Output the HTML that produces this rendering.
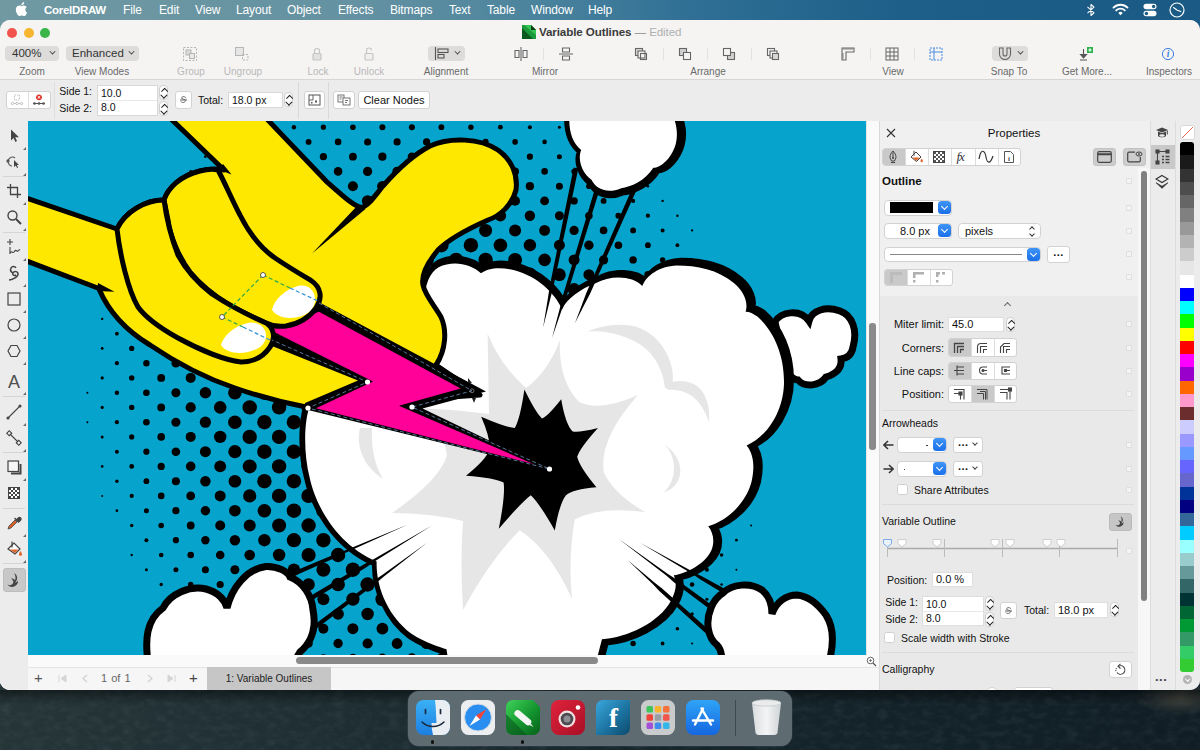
<!DOCTYPE html>
<html><head><meta charset="utf-8"><title>CorelDRAW</title>
<style>
*{box-sizing:border-box;margin:0;padding:0}
html,body{width:1200px;height:750px;overflow:hidden}
body{font-family:"Liberation Sans",sans-serif;font-size:11px;color:#222;background:#1d2a2e;position:relative}
.abs{position:absolute}
#desk{left:0;top:0;width:1200px;height:750px;background:#1c292d;overflow:hidden}
#menubar{left:0;top:0;width:1200px;height:32px;background:linear-gradient(90deg,#7099a2 0%,#6492a2 30%,#4a839d 45%,#2f6f95 58%,#1d5f88 75%,#1a5a84 100%);color:#fff;font-size:12px;letter-spacing:-.15px}
#menubar span{position:absolute;top:2px;line-height:16px;white-space:nowrap}
#win{left:0;top:20px;width:1200px;height:670px;background:#ececec;border-radius:10px;overflow:hidden}
#win>*{position:absolute}
#titlebar{left:0;top:0;width:1200px;height:60px;background:#f5f4f3;border-bottom:1px solid #d6d6d6}
.tl{width:10px;height:10px;border-radius:50%;top:7.75px}
.tlabel{position:absolute;top:46px;font-size:10px;color:#6a6a6a;white-space:nowrap;transform:translateX(-50%);line-height:12px}
.tlabel.dis{color:#b8b8b8}
.pill{position:absolute;top:26px;height:15px;background:#dddcdb;border-radius:4px;font-size:11.5px;line-height:15px;color:#333;padding-left:5px;white-space:nowrap}
.chev{position:absolute;width:5px;height:5px;border:solid #333;border-width:0 1.4px 1.4px 0;transform:rotate(45deg)}
.tsep{position:absolute;top:28px;width:1px;height:12px;background:#e2e2e2}
.ticon{position:absolute;top:25.5px}
.btn{position:absolute;background:#fff;border:1px solid #d2d2d2;border-radius:3px;font-size:11px;color:#111;text-align:center;white-space:nowrap}
.fld{position:absolute;background:#fff;border:1px solid #d8d8d8;font-size:10.5px;line-height:14px;padding-left:3px;color:#111;white-space:nowrap}
.lbl{position:absolute;font-size:10.5px;line-height:14px;color:#111;white-space:nowrap}
.lbl.r{text-align:right}
.step{position:absolute;width:9px;height:15px;background:#fff;border:1px solid #cfcfcf;border-radius:4px}
.step:before,.step:after{content:"";position:absolute;left:1.8px;width:3.5px;height:3.5px;border:solid #222;border-width:1.2px 1.2px 0 0}
.step:before{top:3px;transform:rotate(-45deg)}
.step:after{top:6.500px;transform:rotate(135deg)}
.vsep{position:absolute;width:1px;background:#d9d9d9}
.hsep{position:absolute;height:1px;background:#dcdcdc}
.blue{position:absolute;width:13px;height:13px;border-radius:3.5px;background:linear-gradient(#3f95f7,#1a6fe8)}
.blue:after{content:"";position:absolute;left:4px;top:3px;width:4px;height:4px;border:solid #fff;border-width:0 1.3px 1.3px 0;transform:rotate(45deg)}
.sq{position:absolute;left:1126px;width:6px;height:6px;border:1px solid #dedede;background:#f4f4f4;border-radius:1px}
.seg{position:absolute;height:17px;background:#fff;border:1px solid #d2d2d2;border-radius:3px;overflow:hidden}
.seg i{position:absolute;top:0;height:15px;width:23px;border-right:1px solid #dcdcdc}
.seg i.on{background:#c9c9c9}
.seg.t{height:18.5px}.seg.t i{height:16.5px}#dk .lbl{font-size:10.5px}#dk .lbl.r{font-size:11px}#dk .fld{font-size:11px}.cb{position:absolute;width:11px;height:11px;background:#fff;border:1px solid #d0d0d0;border-radius:2.5px}
.tri{position:absolute;left:23px;width:0;height:0;border-left:3px solid transparent;border-bottom:3px solid #666}
.tool{position:absolute;left:4px;width:20px;height:20px}
</style></head><body>
<div id="desk" class="abs"><svg width="1200" height="750" style="position:absolute;left:0;top:0"><defs><filter id="sea" x="0" y="0" width="100%" height="100%"><feTurbulence type="fractalNoise" baseFrequency="0.09 0.16" numOctaves="3" seed="7"/><feColorMatrix type="matrix" values="0 0 0 0 0.55  0 0 0 0 0.65  0 0 0 0 0.66  0.8 0.8 0 0 -0.68"/></filter><linearGradient id="dg" x1="0" y1="0" x2="1" y2="0"><stop offset="0" stop-color="#263538"/><stop offset=".3" stop-color="#1d2d32"/><stop offset=".55" stop-color="#16252c"/><stop offset="1" stop-color="#101d25"/></linearGradient><radialGradient id="rk" cx=".5" cy=".5" r=".5"><stop offset="0" stop-color="#4a4a40" stop-opacity=".8"/><stop offset="1" stop-color="#4a4a40" stop-opacity="0"/></radialGradient><linearGradient id="sh" x1="0" y1="0" x2="0" y2="1"><stop offset="0" stop-color="#000" stop-opacity=".45"/><stop offset="1" stop-color="#000" stop-opacity="0"/></linearGradient></defs><rect width="1200" height="750" fill="url(#dg)"/><rect y="680" width="1200" height="70" filter="url(#sea)" opacity=".12"/><ellipse cx="1180" cy="698" rx="45" ry="18" fill="url(#rk)"/><rect y="690" width="1200" height="14" fill="url(#sh)"/></svg></div>
<div id="menubar" class="abs">
<svg class="abs" style="left:15px;top:2px" width="14" height="16" viewBox="0 0 14 16"><path fill="#fff" d="M9.6 2.6c.6-.7 1-1.600.9-2.500-.8.050-1.800.55-2.400 1.250-.5.600-1 1.550-.85 2.450.9.050 1.800-.45 2.350-1.200zM10.500 4c-1.300-.05-2.400.75-3 .75-.65 0-1.600-.7-2.600-.7C3.500 4.100 2.300 4.900 1.600 6.100.2 8.500 1.250 12.100 2.600 14.050c.65.950 1.450 2 2.500 2 1-.05 1.400-.65 2.600-.65s1.550.65 2.600.6c1.100 0 1.750-.95 2.400-1.900.75-1.100 1.050-2.150 1.100-2.200-.05 0-2.100-.8-2.100-3.150 0-2 1.600-2.900 1.700-2.950-.95-1.350-2.400-1.500-2.900-1.550z" transform="scale(.88)"/></svg>
<span style="left:44px;font-weight:bold;font-size:11.5px;letter-spacing:-.3px">CorelDRAW</span>
<span style="left:123px">File</span>
<span style="left:159px">Edit</span>
<span style="left:195px">View</span>
<span style="left:236px">Layout</span>
<span style="left:287px">Object</span>
<span style="left:338px">Effects</span>
<span style="left:390px">Bitmaps</span>
<span style="left:449px">Text</span>
<span style="left:487px">Table</span>
<span style="left:531px">Window</span>
<span style="left:588px">Help</span>
<!-- status icons -->
<svg class="abs" style="left:1086px;top:3px" width="10" height="14" viewBox="0 0 10 14"><path d="M1.500 3.800 8 9.800 5 12.500V1.500L8 4.200 1.500 10.200" fill="none" stroke="#fff" stroke-width="1.100" stroke-linejoin="round"/></svg>
<svg class="abs" style="left:1112px;top:3px" width="17" height="13" viewBox="0 0 17 13"><g fill="none" stroke="#fff" stroke-width="1.900" stroke-linecap="round"><path d="M1.500 4.600a10 10 0 0 1 14 0"/><path d="M4.200 7.400a6.200 6.200 0 0 1 8.600 0"/></g><path d="M8.500 12.300 6.300 9.900a3.200 3.200 0 0 1 4.400 0z" fill="#fff"/></svg>
<svg class="abs" style="left:1143px;top:3px" width="14" height="14" viewBox="0 0 14 14"><rect x=".5" y=".8" width="13" height="5.400" rx="2.700" fill="#fff"/><circle cx="10.600" cy="3.500" r="1.700" fill="#1b5d87"/><rect x=".5" y="7.800" width="13" height="5.400" rx="2.700" fill="#fff"/><circle cx="3.400" cy="10.500" r="1.700" fill="#1b5d87"/></svg>
<svg class="abs" style="left:1169px;top:2px" width="16" height="16" viewBox="0 0 16 16"><circle cx="8" cy="8" r="7" fill="none" stroke="#fff" stroke-width="1.200"/><path d="M4.500 5.500 8.300 8.200 11.800 9.600" fill="none" stroke="#fff" stroke-width="1.100" stroke-linecap="round"/></svg>
</div>
<div id="win" class="abs"><div id="titlebar">
<div class="abs tl" style="left:6.900px;background:#f2544d"></div>
<div class="abs tl" style="left:23.500px;background:#f5b52e"></div>
<div class="abs tl" style="left:40.200px;background:#39b54a"></div>
<!-- title -->
<svg class="abs" style="left:522px;top:5px" width="14" height="14" viewBox="0 0 14 14"><path d="M0 0h9l5 5v9H0z" fill="#1a9a3c"/><path d="M0 3 11 14H0z" fill="#0c5a20"/><path d="M2 0h7l5 5v5z" fill="#35c354"/><path d="M9 0v5h5z" fill="#0a3d16"/></svg>
<div class="abs" style="left:539px;top:5px;font-size:11.600px;font-weight:bold;color:#3a3a3a;line-height:14px;white-space:nowrap;letter-spacing:-.1px">Variable Outlines <span style="font-weight:normal;color:#8a8a8a">—</span> <span style="font-weight:normal;color:#b0b0b0">Edited</span></div>
<!-- zoom / view modes -->
<div class="pill" style="left:5px;width:54px;padding-left:7px">400%<i class="chev" style="left:45px;top:3px;transform:rotate(45deg) scale(.85)"></i></div>
<div class="pill" style="left:66px;width:73px;padding-left:6px">Enhanced<i class="chev" style="left:63px;top:3px;transform:rotate(45deg) scale(.85)"></i></div>
<div class="tlabel" style="left:32px">Zoom</div>
<div class="tlabel" style="left:102px">View Modes</div>
<!-- group / ungroup -->
<svg class="ticon" style="left:182px" width="16" height="16" viewBox="0 0 16 16" fill="none" stroke="#b5b5b5"><rect x="1.500" y="1.500" width="13" height="13" stroke-dasharray="2 1.500"/><rect x="4" y="4" width="5" height="5" fill="#dcdcdc"/><rect x="7.500" y="7.500" width="5" height="5" fill="#e8e8e8"/></svg>
<svg class="ticon" style="left:234px" width="16" height="16" viewBox="0 0 16 16" fill="none" stroke="#b5b5b5"><rect x="1.500" y="1.500" width="8" height="8" fill="#e6e6e6"/><rect x="8.500" y="8.500" width="5.500" height="5.500" stroke-dasharray="2 1.500"/></svg>
<div class="tlabel dis" style="left:191px">Group</div>
<div class="tlabel dis" style="left:243px">Ungroup</div>
<!-- lock / unlock -->
<svg class="ticon" style="left:310px" width="14" height="16" viewBox="0 0 14 16" fill="none" stroke="#c4c4c4" stroke-width="1.200"><rect x="3" y="7.500" width="8" height="6.500" rx="1" fill="#e2e2e2"/><path d="M4.500 7.500V5a2.500 2.500 0 0 1 5 0v2.500"/></svg>
<svg class="ticon" style="left:362px" width="14" height="16" viewBox="0 0 14 16" fill="none" stroke="#c4c4c4" stroke-width="1.200"><rect x="3" y="7.500" width="8" height="6.500" rx="1" fill="#f0f0f0"/><path d="M4.500 7.500V4.500a2.500 2.500 0 0 1 5 0"/></svg>
<div class="tlabel dis" style="left:318px">Lock</div>
<div class="tlabel dis" style="left:369px">Unlock</div>
<!-- alignment -->
<div class="pill" style="left:428px;width:37px"><svg class="abs" style="left:6px;top:1px" width="16" height="13" viewBox="0 0 16 13" fill="none" stroke="#555" stroke-width="1.100"><path d="M1.500 0v13"/><rect x="4" y="2" width="10" height="3.500"/><rect x="4" y="7.500" width="6" height="3.500"/></svg><i class="chev" style="left:27px;top:3px;transform:rotate(45deg) scale(.85)"></i></div>
<div class="tlabel" style="left:446px">Alignment</div>
<!-- mirror -->
<svg class="ticon" style="left:513px" width="16" height="16" viewBox="0 0 16 16" fill="none" stroke="#666" stroke-width="1.100"><path d="M8 1v14"/><path d="M2 4.500h4v7H2z"/><path d="M10 4.500h4v7h-4z"/></svg>
<div class="tsep" style="left:543px"></div>
<svg class="ticon" style="left:558px" width="16" height="16" viewBox="0 0 16 16" fill="none" stroke="#666" stroke-width="1.100"><path d="M1 8h14"/><path d="M4.500 2h7v4h-7z"/><path d="M4.500 10h7v4h-7z"/></svg>
<div class="tlabel" style="left:545px">Mirror</div>
<!-- arrange -->
<svg class="ticon" style="left:633px" width="16" height="16" viewBox="0 0 16 16" fill="none" stroke="#666" stroke-width="1.100"><rect x="2.500" y="2.500" width="7" height="7" fill="#d8d8d8"/><rect x="5" y="5" width="7" height="7" fill="#f5f4f3"/><rect x="7.500" y="7.500" width="6" height="6" fill="none"/></svg>
<div class="tsep" style="left:663px"></div>
<svg class="ticon" style="left:677px" width="16" height="16" viewBox="0 0 16 16" fill="none" stroke="#666" stroke-width="1.100"><rect x="2.500" y="2.500" width="7" height="7" fill="#d0d0d0"/><rect x="6.500" y="6.500" width="7" height="7" fill="#f5f4f3"/></svg>
<div class="tsep" style="left:707px"></div>
<svg class="ticon" style="left:721px" width="16" height="16" viewBox="0 0 16 16" fill="none" stroke="#666" stroke-width="1.100"><rect x="6.500" y="6.500" width="7" height="7" fill="#d0d0d0"/><rect x="2.500" y="2.500" width="7" height="7" fill="#f5f4f3"/></svg>
<div class="tsep" style="left:751px"></div>
<svg class="ticon" style="left:765px" width="16" height="16" viewBox="0 0 16 16" fill="none" stroke="#666" stroke-width="1.100"><rect x="2.500" y="2.500" width="7" height="7" fill="#f5f4f3"/><rect x="5" y="5" width="7" height="7" fill="#f5f4f3"/><rect x="7.500" y="7.500" width="6" height="6" fill="#d8d8d8"/></svg>
<div class="tlabel" style="left:708px">Arrange</div>
<!-- view -->
<svg class="ticon" style="left:840px" width="16" height="16" viewBox="0 0 16 16" fill="none" stroke="#666" stroke-width="1.100"><path d="M2 2h12v4H6v8H2z"/><path d="M4 2v2M6 2v2M8 2v2M10 2v2M12 2v2M2 8h2M2 10h2M2 12h2" stroke-width=".8"/></svg>
<div class="tsep" style="left:870px"></div>
<svg class="ticon" style="left:884px" width="16" height="16" viewBox="0 0 16 16" fill="none" stroke="#666" stroke-width="1"><rect x="2" y="2" width="12" height="12"/><path d="M6 2v12M10 2v12M2 6h12M2 10h12"/></svg>
<div class="tsep" style="left:914px"></div>
<svg class="ticon" style="left:928px" width="16" height="16" viewBox="0 0 16 16" fill="none" stroke="#4a8be0" stroke-width="1"><rect x="2" y="2" width="12" height="12" stroke-dasharray="2 1"/><path d="M6 2v12M2 6h12"/></svg>
<div class="tlabel" style="left:893px">View</div>
<!-- snap to -->
<div class="pill" style="left:992px;width:36px"><svg class="abs" style="left:6px;top:1px" width="14" height="13" viewBox="0 0 14 13" fill="none" stroke="#666" stroke-width="1.100"><path d="M1.500 1h3.500v6a2 2 0 0 0 4 0V1h3.500v6a5.500 5.500 0 0 1-11 0z"/></svg><i class="chev" style="left:26px;top:3px;transform:rotate(45deg) scale(.85)"></i></div>
<div class="tlabel" style="left:1009px">Snap To</div>
<!-- get more -->
<svg class="ticon" style="left:1078px" width="18" height="16" viewBox="0 0 18 16"><path d="M5.500 3v8M2.500 8.500l3 3.500 3-3.500zM2 14h7" fill="#555" stroke="#555" stroke-width="1.100"/><rect x="9" y="1" width="6" height="6" fill="#2bb24c"/><path d="M12 2.300v3.400M10.300 4h3.400" stroke="#fff" stroke-width="1.100"/></svg>
<div class="tlabel" style="left:1087px">Get More...</div>
<!-- inspectors -->
<svg class="ticon" style="left:1160px" width="16" height="16" viewBox="0 0 16 16"><circle cx="8" cy="8" r="5.600" fill="none" stroke="#3a7fe0" stroke-width="1"/><text x="8" y="11.300" font-family="Liberation Serif,serif" font-style="italic" font-weight="bold" font-size="9.500" fill="#3a7fe0" text-anchor="middle">i</text></svg>
<div class="tlabel" style="left:1169px">Inspectors</div>
</div>
<div id="propbar" style="left:0;top:60px;width:1200px;height:41px;background:#ececec">
<div class="btn" style="left:6px;top:11px;width:45px;height:18px"></div>
<div class="vsep" style="left:28px;top:12px;height:16px;background:#e0e0e0"></div>
<svg class="abs" style="left:10px;top:14px" width="14" height="12" viewBox="0 0 14 12" fill="none" stroke="#c2c2c2" stroke-width="1"><rect x="4.500" y="1" width="5" height="5" stroke-dasharray="1.500 1"/><path d="M1 9.500h12"/><circle cx="2.500" cy="9.500" r="1.200" fill="#fff"/><circle cx="7" cy="9.500" r="1.200" fill="#fff"/><circle cx="11.500" cy="9.500" r="1.200" fill="#fff"/></svg>
<svg class="abs" style="left:32px;top:14px" width="14" height="12" viewBox="0 0 14 12"><circle cx="7" cy="3.300" r="2.900" fill="#e0322b"/><path d="M5.700 2l2.600 2.600M8.300 2 5.700 4.600" stroke="#fff" stroke-width="1"/><path d="M1 9.500h12" stroke="#555"/><circle cx="2.500" cy="9.500" r="1.300" fill="#555"/><circle cx="7" cy="9.500" r="1.300" fill="#555"/><circle cx="11.500" cy="9.500" r="1.300" fill="#555"/></svg>
<div class="lbl r" style="left:50px;width:42px;top:4px">Side 1:</div>
<div class="lbl r" style="left:50px;width:42px;top:21px">Side 2:</div>
<div class="fld" style="left:97px;top:5px;width:61px;height:31px"></div>
<div class="lbl" style="left:101px;top:6px">10.0</div>
<div class="lbl" style="left:101px;top:20px">8.0</div>
<div class="hsep" style="left:98px;top:20px;width:59px;background:#e8e8e8"></div>
<div class="step" style="left:159px;top:5px"></div>
<div class="step" style="left:159px;top:21px"></div>
<div class="btn" style="left:175px;top:11px;width:17px;height:18px"></div>
<svg class="abs" style="left:179px;top:15px" width="9" height="10" viewBox="0 0 9 10" fill="none" stroke="#666" stroke-width="1"><path d="M7 3.200C6.500 1.200 3 1 2.500 3c-.3 1.500 4 .8 4 2.500S3 8.500 2 6.500"/><path d="M1 5h7"/></svg>
<div class="lbl" style="left:198px;top:13px">Total:</div>
<div class="fld" style="left:228px;top:12px;width:55px;height:16px;line-height:14px">18.0 px</div>
<div class="step" style="left:284px;top:12px"></div>
<div class="vsep" style="left:298px;top:2px;height:37px"></div><div class="vsep" style="left:54px;top:2px;height:37px;background:#dfdfdf"></div>
<div class="btn" style="left:304px;top:11px;width:21px;height:18px"></div>
<svg class="abs" style="left:308px;top:14px" width="13" height="12" viewBox="0 0 13 12" fill="none" stroke="#555" stroke-width="1"><rect x="1" y="1" width="11" height="10"/><path d="M5 1v5H1" stroke-width=".9"/><rect x="7" y="6.500" width="2" height="2" fill="#555" stroke="none"/><rect x="3" y="8" width="1.500" height="1.500" fill="#555" stroke="none"/></svg>
<div class="vsep" style="left:328px;top:2px;height:37px"></div>
<div class="btn" style="left:333px;top:11px;width:22px;height:18px"></div>
<svg class="abs" style="left:337px;top:14px" width="14" height="12" viewBox="0 0 14 12" fill="none" stroke="#666" stroke-width=".9"><rect x="1" y="1" width="6" height="7"/><rect x="6" y="4" width="7" height="7" fill="#fff"/><path d="M2.500 3h3M2.500 5h2M8 6.500h3M8 8.500h2"/></svg>
<div class="btn" style="left:358px;top:11px;width:72px;height:18px;line-height:16px">Clear Nodes</div>
</div>
<div id="toolbox" style="left:0;top:101px;width:28px;height:569px;background:#ececec">
<!-- y in win coords = abs-20 ; inside toolbox = abs-121 -->
<svg class="tool" style="top:5px" viewBox="0 0 20 20"><path d="M7 3.500v11l2.600-2.600 1.800 4 1.600-.8-1.800-3.800H15z" fill="#444"/></svg><i class="tri" style="top:26px"></i>
<svg class="tool" style="top:31px" viewBox="0 0 20 20" fill="none" stroke="#555" stroke-width="1.100"><path d="M4 9c1-4 5-5 7-3M4 9c0 3 2 5 4 5"/><circle cx="4" cy="9" r="1.100" fill="#555"/><path d="M10 8v7l1.800-1.600 1.300 2.600 1-.5-1.300-2.600H15z" fill="#444" stroke="none"/></svg><i class="tri" style="top:52px"></i>
<div class="hsep" style="left:3px;top:55px;width:22px;background:#d6d6d6"></div>
<svg class="tool" style="top:60px" viewBox="0 0 20 20" fill="none" stroke="#444" stroke-width="1.300"><path d="M6.500 3v10.500H17M3 6.500h10.500V17"/></svg><i class="tri" style="top:81px"></i>
<svg class="tool" style="top:86px" viewBox="0 0 20 20" fill="none" stroke="#444" stroke-width="1.400"><circle cx="8.500" cy="8.500" r="4.500"/><path d="M12 12l5 5" stroke-width="2"/></svg><i class="tri" style="top:107px"></i>
<div class="hsep" style="left:3px;top:111px;width:22px;background:#d6d6d6"></div>
<svg class="tool" style="top:116px" viewBox="0 0 20 20" fill="none" stroke="#444" stroke-width="1.100"><path d="M6 2v6M3 5h6"/><path d="M6 10v7"/><path d="M6 16c2-3 2.500 1 4-1s1.500-2 3-1 2-2 3-1"/></svg><i class="tri" style="top:137px"></i>
<svg class="tool" style="top:142px" viewBox="0 0 20 20" fill="none" stroke="#444" stroke-width="1.500"><path d="M5 17c3 0 9-3 9-6s-4-3-5-1 1 3 3 2"/><path d="M9 10c-2-1-3-3-2-5s4-2 5 0" /></svg><i class="tri" style="top:163px"></i>
<svg class="tool" style="top:168px" viewBox="0 0 20 20" fill="none" stroke="#444" stroke-width="1.200"><rect x="4" y="4" width="12" height="12"/></svg><i class="tri" style="top:189px"></i>
<svg class="tool" style="top:194px" viewBox="0 0 20 20" fill="none" stroke="#444" stroke-width="1.200"><circle cx="10" cy="10" r="6"/></svg><i class="tri" style="top:215px"></i>
<svg class="tool" style="top:220px" viewBox="0 0 20 20" fill="none" stroke="#444" stroke-width="1.200"><path d="M7 4.500h6l3 5.500-3 5.500H7L4 10z"/></svg><i class="tri" style="top:241px"></i>
<div class="abs" style="left:4px;top:250px;width:20px;height:22px;font-size:18px;line-height:22px;text-align:center;color:#505050">A</div><i class="tri" style="top:271px"></i>
<div class="hsep" style="left:3px;top:275px;width:22px;background:#d6d6d6"></div>
<svg class="tool" style="top:281px" viewBox="0 0 20 20" fill="none" stroke="#444" stroke-width="1.100"><path d="M4 16 16 4"/><circle cx="4" cy="16" r="1" fill="#444"/><circle cx="16" cy="4" r="1" fill="#444"/></svg><i class="tri" style="top:302px"></i>
<svg class="tool" style="top:307px" viewBox="0 0 20 20" fill="none" stroke="#444" stroke-width="1.100"><path d="M6 6l8 8"/><rect x="3.500" y="3.500" width="3.500" height="3.500" transform="rotate(45 5.250 5.250)"/><rect x="13" y="13" width="3.500" height="3.500" transform="rotate(45 14.750 14.750)"/></svg><i class="tri" style="top:328px"></i>
<div class="hsep" style="left:3px;top:331px;width:22px;background:#d6d6d6"></div>
<svg class="tool" style="top:336px" viewBox="0 0 20 20" fill="none" stroke="#444" stroke-width="1.200"><path d="M7 16.500h9.500V7" stroke-width="2"/><rect x="4" y="4" width="10.500" height="10.500" fill="#f6f6f6"/></svg><i class="tri" style="top:357px"></i>
<svg class="tool" style="top:362px" viewBox="0 0 20 20"><rect x="4.500" y="4.500" width="11" height="11" fill="#fff" stroke="#444"/><g fill="#444"><rect x="5" y="5" width="2" height="2"/><rect x="9" y="5" width="2" height="2"/><rect x="13" y="5" width="2" height="2"/><rect x="7" y="7" width="2" height="2"/><rect x="11" y="7" width="2" height="2"/><rect x="5" y="9" width="2" height="2"/><rect x="9" y="9" width="2" height="2"/><rect x="13" y="9" width="2" height="2"/><rect x="7" y="11" width="2" height="2"/><rect x="11" y="11" width="2" height="2"/><rect x="5" y="13" width="2" height="2"/><rect x="9" y="13" width="2" height="2"/><rect x="13" y="13" width="2" height="2"/></g></svg>
<div class="hsep" style="left:3px;top:387px;width:22px;background:#d6d6d6"></div>
<svg class="tool" style="top:392px" viewBox="0 0 20 20"><path d="M4 16l1-3 6-6 2 2-6 6z" fill="#d9622b" stroke="#444" stroke-width=".8"/><path d="M11 5.500l3.500 3.500M12.500 7l2-2a1.400 1.400 0 0 1 2 2l-2 2" fill="#444" stroke="#444" stroke-width="1.600" stroke-linecap="round"/></svg><i class="tri" style="top:413px"></i>
<svg class="tool" style="top:418px" viewBox="0 0 20 20"><path d="M4 10l6-6 6 6-5 5z" fill="#fff" stroke="#444" stroke-width="1.200"/><path d="M5.500 10.500h9L11 14z" fill="#e0662b"/><path d="M8 2.500v6" stroke="#444" stroke-width="1.200"/><path d="M16.500 12c1 1.500 1.500 2.500 1.500 3.300a1.500 1.500 0 0 1-3 0c0-.8.500-1.800 1.500-3.300z" fill="#e0662b"/></svg><i class="tri" style="top:439px"></i>
<div class="hsep" style="left:3px;top:442px;width:22px;background:#d6d6d6"></div>
<div class="abs" style="left:3px;top:447px;width:23px;height:24px;background:#c8c8c8;border:1px solid #bdbdbd;border-radius:3px"></div>
<svg class="tool" style="top:449px" viewBox="0 0 20 20"><path d="M10 3c4 2 4 7 1 9.500 1.500-.3 2.500-1 3-2 .5 3-2 6-6 6.500-2 0-3.500-1-4.500-2.500 2 1 4 .8 5-.5 1.500-1.800 1-4-1.500-5.500 2 0 3.500.5 4 2C12 8 11.500 5 10 3z" fill="#444"/></svg>
</div>
<div id="cv" style="left:28px;top:101px;width:838px;height:534px;background:#06a3cc;overflow:hidden"><svg width="838" height="534" viewBox="28 121 838 534" style="position:absolute;left:0;top:0;display:block"><rect x="28" y="121" width="838" height="534" fill="#06a3cc"/><g fill="#000"><circle cx="87.4" cy="392.7" r="1.0"/><circle cx="87.4" cy="422.2" r="1.0"/><circle cx="102.2" cy="318.9" r="1.2"/><circle cx="102.2" cy="348.4" r="1.4"/><circle cx="102.2" cy="377.9" r="1.6"/><circle cx="102.2" cy="407.4" r="1.6"/><circle cx="102.2" cy="436.9" r="1.5"/><circle cx="102.2" cy="466.4" r="1.3"/><circle cx="102.2" cy="495.9" r="1.0"/><circle cx="116.9" cy="274.7" r="1.3"/><circle cx="116.9" cy="304.2" r="1.6"/><circle cx="116.9" cy="333.7" r="1.9"/><circle cx="116.9" cy="363.2" r="2.1"/><circle cx="116.9" cy="392.7" r="2.2"/><circle cx="116.9" cy="422.2" r="2.1"/><circle cx="116.9" cy="451.7" r="2.0"/><circle cx="116.9" cy="481.2" r="1.7"/><circle cx="116.9" cy="510.7" r="1.4"/><circle cx="131.7" cy="230.4" r="1.0"/><circle cx="131.7" cy="259.9" r="1.5"/><circle cx="131.7" cy="289.4" r="2.0"/><circle cx="131.7" cy="318.9" r="2.3"/><circle cx="131.7" cy="348.4" r="2.6"/><circle cx="131.7" cy="377.9" r="2.7"/><circle cx="131.7" cy="407.4" r="2.7"/><circle cx="131.7" cy="436.9" r="2.6"/><circle cx="131.7" cy="466.4" r="2.4"/><circle cx="131.7" cy="495.9" r="2.1"/><circle cx="131.7" cy="525.5" r="1.7"/><circle cx="131.7" cy="555.0" r="1.2"/><circle cx="146.4" cy="215.7" r="1.2"/><circle cx="146.4" cy="245.2" r="1.8"/><circle cx="146.4" cy="274.7" r="2.3"/><circle cx="146.4" cy="304.2" r="2.7"/><circle cx="146.4" cy="333.7" r="3.0"/><circle cx="146.4" cy="363.2" r="3.2"/><circle cx="146.4" cy="392.7" r="3.3"/><circle cx="146.4" cy="422.2" r="3.3"/><circle cx="146.4" cy="451.7" r="3.1"/><circle cx="146.4" cy="481.2" r="2.9"/><circle cx="146.4" cy="510.7" r="2.5"/><circle cx="146.4" cy="540.2" r="2.0"/><circle cx="146.4" cy="569.7" r="1.5"/><circle cx="161.2" cy="200.9" r="1.3"/><circle cx="161.2" cy="230.4" r="2.0"/><circle cx="161.2" cy="259.9" r="2.6"/><circle cx="161.2" cy="289.4" r="3.1"/><circle cx="161.2" cy="318.9" r="3.4"/><circle cx="161.2" cy="348.4" r="3.7"/><circle cx="161.2" cy="377.9" r="3.9"/><circle cx="161.2" cy="407.4" r="3.9"/><circle cx="161.2" cy="436.9" r="3.8"/><circle cx="161.2" cy="466.4" r="3.6"/><circle cx="161.2" cy="495.9" r="3.3"/><circle cx="161.2" cy="525.5" r="2.8"/><circle cx="161.2" cy="555.0" r="2.3"/><circle cx="161.2" cy="584.5" r="1.7"/><circle cx="161.2" cy="614.0" r="1.0"/><circle cx="175.9" cy="186.2" r="1.4"/><circle cx="175.9" cy="215.7" r="2.1"/><circle cx="175.9" cy="245.2" r="2.8"/><circle cx="175.9" cy="274.7" r="3.3"/><circle cx="175.9" cy="304.2" r="3.8"/><circle cx="175.9" cy="333.7" r="4.2"/><circle cx="175.9" cy="363.2" r="4.4"/><circle cx="175.9" cy="392.7" r="4.5"/><circle cx="175.9" cy="422.2" r="4.5"/><circle cx="175.9" cy="451.7" r="4.3"/><circle cx="175.9" cy="481.2" r="4.0"/><circle cx="175.9" cy="510.7" r="3.6"/><circle cx="175.9" cy="540.2" r="3.1"/><circle cx="175.9" cy="569.7" r="2.5"/><circle cx="175.9" cy="599.2" r="1.8"/><circle cx="175.9" cy="628.7" r="1.1"/><circle cx="190.7" cy="171.4" r="1.4"/><circle cx="190.7" cy="200.9" r="2.2"/><circle cx="190.7" cy="230.4" r="2.9"/><circle cx="190.7" cy="259.9" r="3.5"/><circle cx="190.7" cy="289.4" r="4.1"/><circle cx="190.7" cy="318.9" r="4.5"/><circle cx="190.7" cy="348.4" r="4.8"/><circle cx="190.7" cy="377.9" r="5.0"/><circle cx="190.7" cy="407.4" r="5.1"/><circle cx="190.7" cy="436.9" r="5.0"/><circle cx="190.7" cy="466.4" r="4.8"/><circle cx="190.7" cy="495.9" r="4.4"/><circle cx="190.7" cy="525.5" r="3.9"/><circle cx="190.7" cy="555.0" r="3.3"/><circle cx="190.7" cy="584.5" r="2.7"/><circle cx="190.7" cy="614.0" r="1.9"/><circle cx="190.7" cy="643.5" r="1.1"/><circle cx="205.4" cy="156.7" r="1.4"/><circle cx="205.4" cy="186.2" r="2.2"/><circle cx="205.4" cy="215.7" r="3.0"/><circle cx="205.4" cy="245.2" r="3.7"/><circle cx="205.4" cy="274.7" r="4.3"/><circle cx="205.4" cy="304.2" r="4.8"/><circle cx="205.4" cy="333.7" r="5.3"/><circle cx="205.4" cy="363.2" r="5.5"/><circle cx="205.4" cy="392.7" r="5.7"/><circle cx="205.4" cy="422.2" r="5.6"/><circle cx="205.4" cy="451.7" r="5.5"/><circle cx="205.4" cy="481.2" r="5.2"/><circle cx="205.4" cy="510.7" r="4.7"/><circle cx="205.4" cy="540.2" r="4.2"/><circle cx="205.4" cy="569.7" r="3.5"/><circle cx="205.4" cy="599.2" r="2.8"/><circle cx="205.4" cy="628.7" r="2.0"/><circle cx="205.4" cy="658.2" r="1.1"/><circle cx="220.2" cy="141.9" r="1.3"/><circle cx="220.2" cy="171.4" r="2.2"/><circle cx="220.2" cy="200.9" r="3.0"/><circle cx="220.2" cy="230.4" r="3.8"/><circle cx="220.2" cy="259.9" r="4.5"/><circle cx="220.2" cy="289.4" r="5.1"/><circle cx="220.2" cy="318.9" r="5.6"/><circle cx="220.2" cy="348.4" r="6.0"/><circle cx="220.2" cy="377.9" r="6.2"/><circle cx="220.2" cy="407.4" r="6.3"/><circle cx="220.2" cy="436.9" r="6.2"/><circle cx="220.2" cy="466.4" r="5.9"/><circle cx="220.2" cy="495.9" r="5.5"/><circle cx="220.2" cy="525.5" r="5.0"/><circle cx="220.2" cy="555.0" r="4.3"/><circle cx="220.2" cy="584.5" r="3.6"/><circle cx="220.2" cy="614.0" r="2.8"/><circle cx="220.2" cy="643.5" r="2.0"/><circle cx="234.9" cy="127.2" r="1.1"/><circle cx="234.9" cy="156.7" r="2.1"/><circle cx="234.9" cy="186.2" r="3.0"/><circle cx="234.9" cy="215.7" r="3.8"/><circle cx="234.9" cy="245.2" r="4.6"/><circle cx="234.9" cy="274.7" r="5.3"/><circle cx="234.9" cy="304.2" r="5.9"/><circle cx="234.9" cy="333.7" r="6.3"/><circle cx="234.9" cy="363.2" r="6.7"/><circle cx="234.9" cy="392.7" r="6.8"/><circle cx="234.9" cy="422.2" r="6.8"/><circle cx="234.9" cy="451.7" r="6.6"/><circle cx="234.9" cy="481.2" r="6.3"/><circle cx="234.9" cy="510.7" r="5.8"/><circle cx="234.9" cy="540.2" r="5.2"/><circle cx="234.9" cy="569.7" r="4.5"/><circle cx="234.9" cy="599.2" r="3.7"/><circle cx="234.9" cy="628.7" r="2.8"/><circle cx="234.9" cy="658.2" r="1.9"/><circle cx="249.7" cy="141.9" r="1.9"/><circle cx="249.7" cy="171.4" r="2.9"/><circle cx="249.7" cy="200.9" r="3.8"/><circle cx="249.7" cy="230.4" r="4.6"/><circle cx="249.7" cy="259.9" r="5.4"/><circle cx="249.7" cy="289.4" r="6.1"/><circle cx="249.7" cy="318.9" r="6.6"/><circle cx="249.7" cy="348.4" r="7.1"/><circle cx="249.7" cy="377.9" r="7.2"/><circle cx="249.7" cy="407.4" r="7.2"/><circle cx="249.7" cy="436.9" r="7.2"/><circle cx="249.7" cy="466.4" r="7.0"/><circle cx="249.7" cy="495.9" r="6.6"/><circle cx="249.7" cy="525.5" r="6.0"/><circle cx="249.7" cy="555.0" r="5.3"/><circle cx="249.7" cy="584.5" r="4.5"/><circle cx="249.7" cy="614.0" r="3.7"/><circle cx="249.7" cy="643.5" r="2.8"/><circle cx="264.4" cy="127.2" r="1.7"/><circle cx="264.4" cy="156.7" r="2.7"/><circle cx="264.4" cy="186.2" r="3.6"/><circle cx="264.4" cy="215.7" r="4.5"/><circle cx="264.4" cy="245.2" r="5.4"/><circle cx="264.4" cy="274.7" r="6.2"/><circle cx="264.4" cy="304.2" r="6.8"/><circle cx="264.4" cy="333.7" r="7.2"/><circle cx="264.4" cy="363.2" r="7.2"/><circle cx="264.4" cy="392.7" r="7.2"/><circle cx="264.4" cy="422.2" r="7.2"/><circle cx="264.4" cy="451.7" r="7.2"/><circle cx="264.4" cy="481.2" r="7.2"/><circle cx="264.4" cy="510.7" r="6.8"/><circle cx="264.4" cy="540.2" r="6.2"/><circle cx="264.4" cy="569.7" r="5.4"/><circle cx="264.4" cy="599.2" r="4.5"/><circle cx="264.4" cy="628.7" r="3.6"/><circle cx="264.4" cy="658.2" r="2.7"/><circle cx="279.1" cy="112.4" r="1.4"/><circle cx="279.1" cy="141.9" r="2.5"/><circle cx="279.1" cy="171.4" r="3.5"/><circle cx="279.1" cy="200.9" r="4.4"/><circle cx="279.1" cy="230.4" r="5.3"/><circle cx="279.1" cy="259.9" r="6.2"/><circle cx="279.1" cy="289.4" r="7.0"/><circle cx="279.1" cy="318.9" r="7.2"/><circle cx="279.1" cy="348.4" r="7.2"/><circle cx="279.1" cy="377.9" r="7.2"/><circle cx="279.1" cy="407.4" r="7.2"/><circle cx="279.1" cy="436.9" r="7.2"/><circle cx="279.1" cy="466.4" r="7.2"/><circle cx="279.1" cy="495.9" r="7.2"/><circle cx="279.1" cy="525.5" r="7.0"/><circle cx="279.1" cy="555.0" r="6.2"/><circle cx="279.1" cy="584.5" r="5.4"/><circle cx="279.1" cy="614.0" r="4.5"/><circle cx="279.1" cy="643.5" r="3.5"/><circle cx="293.9" cy="127.2" r="2.2"/><circle cx="293.9" cy="156.7" r="3.2"/><circle cx="293.9" cy="186.2" r="4.2"/><circle cx="293.9" cy="215.7" r="5.2"/><circle cx="293.9" cy="245.2" r="6.1"/><circle cx="293.9" cy="274.7" r="7.0"/><circle cx="293.9" cy="304.2" r="7.2"/><circle cx="293.9" cy="333.7" r="7.2"/><circle cx="293.9" cy="363.2" r="7.2"/><circle cx="293.9" cy="392.7" r="7.2"/><circle cx="293.9" cy="422.2" r="7.2"/><circle cx="293.9" cy="451.7" r="7.2"/><circle cx="293.9" cy="481.2" r="7.2"/><circle cx="293.9" cy="510.7" r="7.2"/><circle cx="293.9" cy="540.2" r="7.1"/><circle cx="293.9" cy="569.7" r="6.2"/><circle cx="293.9" cy="599.2" r="5.3"/><circle cx="293.9" cy="628.7" r="4.3"/><circle cx="293.9" cy="658.2" r="3.3"/><circle cx="308.6" cy="112.4" r="1.9"/><circle cx="308.6" cy="141.9" r="2.9"/><circle cx="308.6" cy="171.4" r="4.0"/><circle cx="308.6" cy="200.9" r="5.0"/><circle cx="308.6" cy="230.4" r="6.0"/><circle cx="308.6" cy="259.9" r="6.9"/><circle cx="308.6" cy="289.4" r="7.2"/><circle cx="308.6" cy="318.9" r="7.2"/><circle cx="308.6" cy="348.4" r="7.2"/><circle cx="308.6" cy="377.9" r="7.2"/><circle cx="308.6" cy="407.4" r="7.2"/><circle cx="308.6" cy="436.9" r="7.2"/><circle cx="308.6" cy="466.4" r="7.2"/><circle cx="308.6" cy="495.9" r="7.2"/><circle cx="308.6" cy="525.5" r="7.2"/><circle cx="308.6" cy="555.0" r="7.1"/><circle cx="308.6" cy="584.5" r="6.2"/><circle cx="308.6" cy="614.0" r="5.2"/><circle cx="308.6" cy="643.5" r="4.2"/><circle cx="323.4" cy="127.2" r="2.6"/><circle cx="323.4" cy="156.7" r="3.6"/><circle cx="323.4" cy="186.2" r="4.7"/><circle cx="323.4" cy="215.7" r="5.7"/><circle cx="323.4" cy="245.2" r="6.7"/><circle cx="323.4" cy="274.7" r="7.2"/><circle cx="323.4" cy="304.2" r="7.2"/><circle cx="323.4" cy="333.7" r="7.2"/><circle cx="323.4" cy="363.2" r="7.2"/><circle cx="323.4" cy="392.7" r="7.2"/><circle cx="323.4" cy="422.2" r="7.2"/><circle cx="323.4" cy="451.7" r="7.2"/><circle cx="323.4" cy="481.2" r="7.2"/><circle cx="323.4" cy="510.7" r="7.2"/><circle cx="323.4" cy="540.2" r="7.2"/><circle cx="323.4" cy="569.7" r="7.0"/><circle cx="323.4" cy="599.2" r="6.0"/><circle cx="323.4" cy="628.7" r="5.0"/><circle cx="323.4" cy="658.2" r="3.9"/><circle cx="338.1" cy="112.4" r="2.2"/><circle cx="338.1" cy="141.9" r="3.3"/><circle cx="338.1" cy="171.4" r="4.3"/><circle cx="338.1" cy="200.9" r="5.4"/><circle cx="338.1" cy="230.4" r="6.5"/><circle cx="338.1" cy="259.9" r="7.2"/><circle cx="338.1" cy="289.4" r="7.2"/><circle cx="338.1" cy="318.9" r="7.2"/><circle cx="338.1" cy="348.4" r="7.2"/><circle cx="338.1" cy="377.9" r="7.2"/><circle cx="338.1" cy="407.4" r="7.2"/><circle cx="338.1" cy="436.9" r="7.2"/><circle cx="338.1" cy="466.4" r="7.2"/><circle cx="338.1" cy="495.9" r="7.2"/><circle cx="338.1" cy="525.5" r="7.2"/><circle cx="338.1" cy="555.0" r="7.2"/><circle cx="338.1" cy="584.5" r="6.8"/><circle cx="338.1" cy="614.0" r="5.8"/><circle cx="338.1" cy="643.5" r="4.7"/><circle cx="352.9" cy="127.2" r="2.8"/><circle cx="352.9" cy="156.7" r="3.9"/><circle cx="352.9" cy="186.2" r="5.0"/><circle cx="352.9" cy="215.7" r="6.1"/><circle cx="352.9" cy="245.2" r="7.2"/><circle cx="352.9" cy="274.7" r="7.2"/><circle cx="352.9" cy="304.2" r="7.2"/><circle cx="352.9" cy="333.7" r="7.2"/><circle cx="352.9" cy="363.2" r="7.2"/><circle cx="352.9" cy="392.7" r="7.2"/><circle cx="352.9" cy="422.2" r="7.2"/><circle cx="352.9" cy="451.7" r="7.2"/><circle cx="352.9" cy="481.2" r="7.2"/><circle cx="352.9" cy="510.7" r="7.2"/><circle cx="352.9" cy="540.2" r="7.2"/><circle cx="352.9" cy="569.7" r="7.2"/><circle cx="352.9" cy="599.2" r="6.6"/><circle cx="352.9" cy="628.7" r="5.5"/><circle cx="352.9" cy="658.2" r="4.4"/><circle cx="367.6" cy="112.4" r="2.4"/><circle cx="367.6" cy="141.9" r="3.5"/><circle cx="367.6" cy="171.4" r="4.6"/><circle cx="367.6" cy="200.9" r="5.7"/><circle cx="367.6" cy="230.4" r="6.8"/><circle cx="367.6" cy="259.9" r="7.2"/><circle cx="367.6" cy="289.4" r="7.2"/><circle cx="367.6" cy="318.9" r="7.2"/><circle cx="367.6" cy="348.4" r="7.2"/><circle cx="367.6" cy="377.9" r="7.2"/><circle cx="367.6" cy="407.4" r="7.2"/><circle cx="367.6" cy="436.9" r="7.2"/><circle cx="367.6" cy="466.4" r="7.2"/><circle cx="367.6" cy="495.9" r="7.2"/><circle cx="367.6" cy="525.5" r="7.2"/><circle cx="367.6" cy="555.0" r="7.2"/><circle cx="367.6" cy="584.5" r="7.2"/><circle cx="367.6" cy="614.0" r="6.2"/><circle cx="367.6" cy="643.5" r="5.1"/><circle cx="382.4" cy="127.2" r="3.0"/><circle cx="382.4" cy="156.7" r="4.1"/><circle cx="382.4" cy="186.2" r="5.3"/><circle cx="382.4" cy="215.7" r="6.4"/><circle cx="382.4" cy="245.2" r="7.2"/><circle cx="382.4" cy="274.7" r="7.2"/><circle cx="382.4" cy="304.2" r="7.2"/><circle cx="382.4" cy="333.7" r="7.2"/><circle cx="382.4" cy="363.2" r="7.2"/><circle cx="382.4" cy="392.7" r="7.2"/><circle cx="382.4" cy="422.2" r="7.2"/><circle cx="382.4" cy="451.7" r="7.2"/><circle cx="382.4" cy="481.2" r="7.2"/><circle cx="382.4" cy="510.7" r="7.2"/><circle cx="382.4" cy="540.2" r="7.2"/><circle cx="382.4" cy="569.7" r="7.2"/><circle cx="382.4" cy="599.2" r="7.0"/><circle cx="382.4" cy="628.7" r="5.9"/><circle cx="382.4" cy="658.2" r="4.7"/><circle cx="397.1" cy="112.4" r="2.4"/><circle cx="397.1" cy="141.9" r="3.6"/><circle cx="397.1" cy="171.4" r="4.7"/><circle cx="397.1" cy="200.9" r="5.9"/><circle cx="397.1" cy="230.4" r="7.0"/><circle cx="397.1" cy="259.9" r="7.2"/><circle cx="397.1" cy="289.4" r="7.2"/><circle cx="397.1" cy="318.9" r="7.2"/><circle cx="397.1" cy="348.4" r="7.2"/><circle cx="397.1" cy="377.9" r="7.2"/><circle cx="397.1" cy="407.4" r="7.2"/><circle cx="397.1" cy="436.9" r="7.2"/><circle cx="397.1" cy="466.4" r="7.2"/><circle cx="397.1" cy="495.9" r="7.2"/><circle cx="397.1" cy="525.5" r="7.2"/><circle cx="397.1" cy="555.0" r="7.2"/><circle cx="397.1" cy="584.5" r="7.2"/><circle cx="397.1" cy="614.0" r="6.6"/><circle cx="397.1" cy="643.5" r="5.4"/><circle cx="411.9" cy="127.2" r="3.0"/><circle cx="411.9" cy="156.7" r="4.2"/><circle cx="411.9" cy="186.2" r="5.3"/><circle cx="411.9" cy="215.7" r="6.5"/><circle cx="411.9" cy="245.2" r="7.2"/><circle cx="411.9" cy="274.7" r="7.2"/><circle cx="411.9" cy="304.2" r="7.2"/><circle cx="411.9" cy="333.7" r="7.2"/><circle cx="411.9" cy="363.2" r="7.2"/><circle cx="411.9" cy="392.7" r="7.2"/><circle cx="411.9" cy="422.2" r="7.2"/><circle cx="411.9" cy="451.7" r="7.2"/><circle cx="411.9" cy="481.2" r="7.2"/><circle cx="411.9" cy="510.7" r="7.2"/><circle cx="411.9" cy="540.2" r="7.2"/><circle cx="411.9" cy="569.7" r="7.2"/><circle cx="411.9" cy="599.2" r="7.2"/><circle cx="411.9" cy="628.7" r="6.1"/><circle cx="411.9" cy="658.2" r="4.9"/><circle cx="426.6" cy="112.4" r="2.4"/><circle cx="426.6" cy="141.9" r="3.6"/><circle cx="426.6" cy="171.4" r="4.7"/><circle cx="426.6" cy="200.9" r="5.9"/><circle cx="426.6" cy="230.4" r="7.0"/><circle cx="426.6" cy="259.9" r="7.2"/><circle cx="426.6" cy="289.4" r="7.2"/><circle cx="426.6" cy="318.9" r="7.2"/><circle cx="426.6" cy="348.4" r="7.2"/><circle cx="426.6" cy="377.9" r="7.2"/><circle cx="426.6" cy="407.4" r="7.2"/><circle cx="426.6" cy="436.9" r="7.2"/><circle cx="426.6" cy="466.4" r="7.2"/><circle cx="426.6" cy="495.9" r="7.2"/><circle cx="426.6" cy="525.5" r="7.2"/><circle cx="426.6" cy="555.0" r="7.2"/><circle cx="426.6" cy="584.5" r="7.2"/><circle cx="426.6" cy="614.0" r="6.7"/><circle cx="426.6" cy="643.5" r="5.6"/><circle cx="441.4" cy="127.2" r="2.9"/><circle cx="441.4" cy="156.7" r="4.1"/><circle cx="441.4" cy="186.2" r="5.2"/><circle cx="441.4" cy="215.7" r="6.4"/><circle cx="441.4" cy="245.2" r="7.2"/><circle cx="441.4" cy="274.7" r="7.2"/><circle cx="441.4" cy="304.2" r="7.2"/><circle cx="441.4" cy="333.7" r="7.2"/><circle cx="441.4" cy="363.2" r="7.2"/><circle cx="441.4" cy="392.7" r="7.2"/><circle cx="441.4" cy="422.2" r="7.2"/><circle cx="441.4" cy="451.7" r="7.2"/><circle cx="441.4" cy="481.2" r="7.2"/><circle cx="441.4" cy="510.7" r="7.2"/><circle cx="441.4" cy="540.2" r="7.2"/><circle cx="441.4" cy="569.7" r="7.2"/><circle cx="441.4" cy="599.2" r="7.2"/><circle cx="441.4" cy="628.7" r="6.2"/><circle cx="441.4" cy="658.2" r="5.0"/><circle cx="456.1" cy="112.4" r="2.3"/><circle cx="456.1" cy="141.9" r="3.4"/><circle cx="456.1" cy="171.4" r="4.6"/><circle cx="456.1" cy="200.9" r="5.7"/><circle cx="456.1" cy="230.4" r="6.8"/><circle cx="456.1" cy="259.9" r="7.2"/><circle cx="456.1" cy="289.4" r="7.2"/><circle cx="456.1" cy="318.9" r="7.2"/><circle cx="456.1" cy="348.4" r="7.2"/><circle cx="456.1" cy="377.9" r="7.2"/><circle cx="456.1" cy="407.4" r="7.2"/><circle cx="456.1" cy="436.9" r="7.2"/><circle cx="456.1" cy="466.4" r="7.2"/><circle cx="456.1" cy="495.9" r="7.2"/><circle cx="456.1" cy="525.5" r="7.2"/><circle cx="456.1" cy="555.0" r="7.2"/><circle cx="456.1" cy="584.5" r="7.2"/><circle cx="456.1" cy="614.0" r="6.7"/><circle cx="456.1" cy="643.5" r="5.6"/><circle cx="470.9" cy="127.2" r="2.7"/><circle cx="470.9" cy="156.7" r="3.9"/><circle cx="470.9" cy="186.2" r="5.0"/><circle cx="470.9" cy="215.7" r="6.1"/><circle cx="470.9" cy="245.2" r="7.2"/><circle cx="470.9" cy="274.7" r="7.2"/><circle cx="470.9" cy="304.2" r="7.2"/><circle cx="470.9" cy="333.7" r="7.2"/><circle cx="470.9" cy="363.2" r="7.2"/><circle cx="470.9" cy="392.7" r="7.2"/><circle cx="470.9" cy="422.2" r="7.2"/><circle cx="470.9" cy="451.7" r="7.2"/><circle cx="470.9" cy="481.2" r="7.2"/><circle cx="470.9" cy="510.7" r="7.2"/><circle cx="470.9" cy="540.2" r="7.2"/><circle cx="470.9" cy="569.7" r="7.2"/><circle cx="470.9" cy="599.2" r="7.2"/><circle cx="470.9" cy="628.7" r="6.1"/><circle cx="470.9" cy="658.2" r="4.9"/><circle cx="485.6" cy="112.4" r="2.0"/><circle cx="485.6" cy="141.9" r="3.1"/><circle cx="485.6" cy="171.4" r="4.3"/><circle cx="485.6" cy="200.9" r="5.4"/><circle cx="485.6" cy="230.4" r="6.5"/><circle cx="485.6" cy="259.9" r="7.2"/><circle cx="485.6" cy="289.4" r="7.2"/><circle cx="485.6" cy="318.9" r="7.2"/><circle cx="485.6" cy="348.4" r="7.2"/><circle cx="485.6" cy="377.9" r="7.2"/><circle cx="485.6" cy="407.4" r="7.2"/><circle cx="485.6" cy="436.9" r="7.2"/><circle cx="485.6" cy="466.4" r="7.2"/><circle cx="485.6" cy="495.9" r="7.2"/><circle cx="485.6" cy="525.5" r="7.2"/><circle cx="485.6" cy="555.0" r="7.2"/><circle cx="485.6" cy="584.5" r="7.2"/><circle cx="485.6" cy="614.0" r="6.5"/><circle cx="485.6" cy="643.5" r="5.4"/><circle cx="500.4" cy="127.2" r="2.4"/><circle cx="500.4" cy="156.7" r="3.5"/><circle cx="500.4" cy="186.2" r="4.6"/><circle cx="500.4" cy="215.7" r="5.7"/><circle cx="500.4" cy="245.2" r="6.8"/><circle cx="500.4" cy="274.7" r="7.2"/><circle cx="500.4" cy="304.2" r="7.2"/><circle cx="500.4" cy="333.7" r="7.2"/><circle cx="500.4" cy="363.2" r="7.2"/><circle cx="500.4" cy="392.7" r="7.2"/><circle cx="500.4" cy="422.2" r="7.2"/><circle cx="500.4" cy="451.7" r="7.2"/><circle cx="500.4" cy="481.2" r="7.2"/><circle cx="500.4" cy="510.7" r="7.2"/><circle cx="500.4" cy="540.2" r="7.2"/><circle cx="500.4" cy="569.7" r="7.2"/><circle cx="500.4" cy="599.2" r="6.9"/><circle cx="500.4" cy="628.7" r="5.8"/><circle cx="500.4" cy="658.2" r="4.7"/><circle cx="515.1" cy="112.4" r="1.7"/><circle cx="515.1" cy="141.9" r="2.8"/><circle cx="515.1" cy="171.4" r="3.9"/><circle cx="515.1" cy="200.9" r="4.9"/><circle cx="515.1" cy="230.4" r="6.0"/><circle cx="515.1" cy="259.9" r="7.0"/><circle cx="515.1" cy="289.4" r="7.2"/><circle cx="515.1" cy="318.9" r="7.2"/><circle cx="515.1" cy="348.4" r="7.2"/><circle cx="515.1" cy="377.9" r="7.2"/><circle cx="515.1" cy="407.4" r="7.2"/><circle cx="515.1" cy="436.9" r="7.2"/><circle cx="515.1" cy="466.4" r="7.2"/><circle cx="515.1" cy="495.9" r="7.2"/><circle cx="515.1" cy="525.5" r="7.2"/><circle cx="515.1" cy="555.0" r="7.2"/><circle cx="515.1" cy="584.5" r="7.1"/><circle cx="515.1" cy="614.0" r="6.1"/><circle cx="515.1" cy="643.5" r="5.1"/><circle cx="529.9" cy="127.2" r="2.0"/><circle cx="529.9" cy="156.7" r="3.1"/><circle cx="529.9" cy="186.2" r="4.1"/><circle cx="529.9" cy="215.7" r="5.2"/><circle cx="529.9" cy="245.2" r="6.2"/><circle cx="529.9" cy="274.7" r="7.1"/><circle cx="529.9" cy="304.2" r="7.2"/><circle cx="529.9" cy="333.7" r="7.2"/><circle cx="529.9" cy="363.2" r="7.2"/><circle cx="529.9" cy="392.7" r="7.2"/><circle cx="529.9" cy="422.2" r="7.2"/><circle cx="529.9" cy="451.7" r="7.2"/><circle cx="529.9" cy="481.2" r="7.2"/><circle cx="529.9" cy="510.7" r="7.2"/><circle cx="529.9" cy="540.2" r="7.2"/><circle cx="529.9" cy="569.7" r="7.2"/><circle cx="529.9" cy="599.2" r="6.4"/><circle cx="529.9" cy="628.7" r="5.4"/><circle cx="529.9" cy="658.2" r="4.4"/><circle cx="544.6" cy="112.4" r="1.2"/><circle cx="544.6" cy="141.9" r="2.3"/><circle cx="544.6" cy="171.4" r="3.3"/><circle cx="544.6" cy="200.9" r="4.4"/><circle cx="544.6" cy="230.4" r="5.4"/><circle cx="544.6" cy="259.9" r="6.3"/><circle cx="544.6" cy="289.4" r="7.2"/><circle cx="544.6" cy="318.9" r="7.2"/><circle cx="544.6" cy="348.4" r="7.2"/><circle cx="544.6" cy="377.9" r="7.2"/><circle cx="544.6" cy="407.4" r="7.2"/><circle cx="544.6" cy="436.9" r="7.2"/><circle cx="544.6" cy="466.4" r="7.2"/><circle cx="544.6" cy="495.9" r="7.2"/><circle cx="544.6" cy="525.5" r="7.2"/><circle cx="544.6" cy="555.0" r="7.2"/><circle cx="544.6" cy="584.5" r="6.6"/><circle cx="544.6" cy="614.0" r="5.6"/><circle cx="544.6" cy="643.5" r="4.6"/><circle cx="559.4" cy="127.2" r="1.5"/><circle cx="559.4" cy="156.7" r="2.5"/><circle cx="559.4" cy="186.2" r="3.5"/><circle cx="559.4" cy="215.7" r="4.5"/><circle cx="559.4" cy="245.2" r="5.5"/><circle cx="559.4" cy="274.7" r="6.4"/><circle cx="559.4" cy="304.2" r="7.2"/><circle cx="559.4" cy="333.7" r="7.2"/><circle cx="559.4" cy="363.2" r="7.2"/><circle cx="559.4" cy="392.7" r="7.2"/><circle cx="559.4" cy="422.2" r="7.2"/><circle cx="559.4" cy="451.7" r="7.2"/><circle cx="559.4" cy="481.2" r="7.2"/><circle cx="559.4" cy="510.7" r="7.2"/><circle cx="559.4" cy="540.2" r="7.2"/><circle cx="559.4" cy="569.7" r="6.6"/><circle cx="559.4" cy="599.2" r="5.8"/><circle cx="559.4" cy="628.7" r="4.9"/><circle cx="559.4" cy="658.2" r="3.9"/><circle cx="574.1" cy="141.9" r="1.7"/><circle cx="574.1" cy="171.4" r="2.7"/><circle cx="574.1" cy="200.9" r="3.7"/><circle cx="574.1" cy="230.4" r="4.6"/><circle cx="574.1" cy="259.9" r="5.5"/><circle cx="574.1" cy="289.4" r="6.3"/><circle cx="574.1" cy="318.9" r="7.1"/><circle cx="574.1" cy="348.4" r="7.2"/><circle cx="574.1" cy="377.9" r="7.2"/><circle cx="574.1" cy="407.4" r="7.2"/><circle cx="574.1" cy="436.9" r="7.2"/><circle cx="574.1" cy="466.4" r="7.2"/><circle cx="574.1" cy="495.9" r="7.2"/><circle cx="574.1" cy="525.5" r="7.2"/><circle cx="574.1" cy="555.0" r="6.6"/><circle cx="574.1" cy="584.5" r="5.9"/><circle cx="574.1" cy="614.0" r="5.0"/><circle cx="574.1" cy="643.5" r="4.1"/><circle cx="588.9" cy="156.7" r="1.9"/><circle cx="588.9" cy="186.2" r="2.8"/><circle cx="588.9" cy="215.7" r="3.8"/><circle cx="588.9" cy="245.2" r="4.7"/><circle cx="588.9" cy="274.7" r="5.5"/><circle cx="588.9" cy="304.2" r="6.2"/><circle cx="588.9" cy="333.7" r="6.9"/><circle cx="588.9" cy="363.2" r="7.2"/><circle cx="588.9" cy="392.7" r="7.2"/><circle cx="588.9" cy="422.2" r="7.2"/><circle cx="588.9" cy="451.7" r="7.2"/><circle cx="588.9" cy="481.2" r="7.2"/><circle cx="588.9" cy="510.7" r="7.1"/><circle cx="588.9" cy="540.2" r="6.5"/><circle cx="588.9" cy="569.7" r="5.8"/><circle cx="588.9" cy="599.2" r="5.1"/><circle cx="588.9" cy="628.7" r="4.2"/><circle cx="588.9" cy="658.2" r="3.3"/><circle cx="603.6" cy="141.9" r="1.1"/><circle cx="603.6" cy="171.4" r="2.0"/><circle cx="603.6" cy="200.9" r="2.9"/><circle cx="603.6" cy="230.4" r="3.8"/><circle cx="603.6" cy="259.9" r="4.6"/><circle cx="603.6" cy="289.4" r="5.4"/><circle cx="603.6" cy="318.9" r="6.0"/><circle cx="603.6" cy="348.4" r="6.6"/><circle cx="603.6" cy="377.9" r="7.0"/><circle cx="603.6" cy="407.4" r="7.2"/><circle cx="603.6" cy="436.9" r="7.2"/><circle cx="603.6" cy="466.4" r="7.1"/><circle cx="603.6" cy="495.9" r="6.8"/><circle cx="603.6" cy="525.5" r="6.3"/><circle cx="603.6" cy="555.0" r="5.8"/><circle cx="603.6" cy="584.5" r="5.1"/><circle cx="603.6" cy="614.0" r="4.3"/><circle cx="603.6" cy="643.5" r="3.4"/><circle cx="618.4" cy="156.7" r="1.2"/><circle cx="618.4" cy="186.2" r="2.1"/><circle cx="618.4" cy="215.7" r="3.0"/><circle cx="618.4" cy="245.2" r="3.8"/><circle cx="618.4" cy="274.7" r="4.5"/><circle cx="618.4" cy="304.2" r="5.2"/><circle cx="618.4" cy="333.7" r="5.8"/><circle cx="618.4" cy="363.2" r="6.2"/><circle cx="618.4" cy="392.7" r="6.5"/><circle cx="618.4" cy="422.2" r="6.7"/><circle cx="618.4" cy="451.7" r="6.6"/><circle cx="618.4" cy="481.2" r="6.4"/><circle cx="618.4" cy="510.7" r="6.1"/><circle cx="618.4" cy="540.2" r="5.6"/><circle cx="618.4" cy="569.7" r="5.0"/><circle cx="618.4" cy="599.2" r="4.3"/><circle cx="618.4" cy="628.7" r="3.5"/><circle cx="618.4" cy="658.2" r="2.6"/><circle cx="633.1" cy="171.4" r="1.2"/><circle cx="633.1" cy="200.9" r="2.1"/><circle cx="633.1" cy="230.4" r="2.9"/><circle cx="633.1" cy="259.9" r="3.7"/><circle cx="633.1" cy="289.4" r="4.4"/><circle cx="633.1" cy="318.9" r="5.0"/><circle cx="633.1" cy="348.4" r="5.5"/><circle cx="633.1" cy="377.9" r="5.8"/><circle cx="633.1" cy="407.4" r="6.0"/><circle cx="633.1" cy="436.9" r="6.1"/><circle cx="633.1" cy="466.4" r="6.0"/><circle cx="633.1" cy="495.9" r="5.7"/><circle cx="633.1" cy="525.5" r="5.3"/><circle cx="633.1" cy="555.0" r="4.8"/><circle cx="633.1" cy="584.5" r="4.2"/><circle cx="633.1" cy="614.0" r="3.5"/><circle cx="633.1" cy="643.5" r="2.7"/><circle cx="647.9" cy="186.2" r="1.3"/><circle cx="647.9" cy="215.7" r="2.1"/><circle cx="647.9" cy="245.2" r="2.9"/><circle cx="647.9" cy="274.7" r="3.6"/><circle cx="647.9" cy="304.2" r="4.2"/><circle cx="647.9" cy="333.7" r="4.7"/><circle cx="647.9" cy="363.2" r="5.1"/><circle cx="647.9" cy="392.7" r="5.4"/><circle cx="647.9" cy="422.2" r="5.5"/><circle cx="647.9" cy="451.7" r="5.5"/><circle cx="647.9" cy="481.2" r="5.3"/><circle cx="647.9" cy="510.7" r="5.0"/><circle cx="647.9" cy="540.2" r="4.6"/><circle cx="647.9" cy="569.7" r="4.0"/><circle cx="647.9" cy="599.2" r="3.4"/><circle cx="647.9" cy="628.7" r="2.7"/><circle cx="647.9" cy="658.2" r="1.9"/><circle cx="662.6" cy="200.9" r="1.2"/><circle cx="662.6" cy="230.4" r="2.0"/><circle cx="662.6" cy="259.9" r="2.7"/><circle cx="662.6" cy="289.4" r="3.4"/><circle cx="662.6" cy="318.9" r="3.9"/><circle cx="662.6" cy="348.4" r="4.3"/><circle cx="662.6" cy="377.9" r="4.7"/><circle cx="662.6" cy="407.4" r="4.9"/><circle cx="662.6" cy="436.9" r="4.9"/><circle cx="662.6" cy="466.4" r="4.8"/><circle cx="662.6" cy="495.9" r="4.6"/><circle cx="662.6" cy="525.5" r="4.3"/><circle cx="662.6" cy="555.0" r="3.8"/><circle cx="662.6" cy="584.5" r="3.3"/><circle cx="662.6" cy="614.0" r="2.6"/><circle cx="662.6" cy="643.5" r="1.9"/><circle cx="677.4" cy="215.7" r="1.2"/><circle cx="677.4" cy="245.2" r="1.9"/><circle cx="677.4" cy="274.7" r="2.5"/><circle cx="677.4" cy="304.2" r="3.1"/><circle cx="677.4" cy="333.7" r="3.6"/><circle cx="677.4" cy="363.2" r="4.0"/><circle cx="677.4" cy="392.7" r="4.2"/><circle cx="677.4" cy="422.2" r="4.3"/><circle cx="677.4" cy="451.7" r="4.3"/><circle cx="677.4" cy="481.2" r="4.2"/><circle cx="677.4" cy="510.7" r="3.9"/><circle cx="677.4" cy="540.2" r="3.5"/><circle cx="677.4" cy="569.7" r="3.0"/><circle cx="677.4" cy="599.2" r="2.5"/><circle cx="677.4" cy="628.7" r="1.8"/><circle cx="677.4" cy="658.2" r="1.1"/><circle cx="692.1" cy="230.4" r="1.1"/><circle cx="692.1" cy="259.9" r="1.7"/><circle cx="692.1" cy="289.4" r="2.3"/><circle cx="692.1" cy="318.9" r="2.8"/><circle cx="692.1" cy="348.4" r="3.2"/><circle cx="692.1" cy="377.9" r="3.5"/><circle cx="692.1" cy="407.4" r="3.7"/><circle cx="692.1" cy="436.9" r="3.8"/><circle cx="692.1" cy="466.4" r="3.7"/><circle cx="692.1" cy="495.9" r="3.5"/><circle cx="692.1" cy="525.5" r="3.2"/><circle cx="692.1" cy="555.0" r="2.8"/><circle cx="692.1" cy="584.5" r="2.3"/><circle cx="692.1" cy="614.0" r="1.7"/><circle cx="692.1" cy="643.5" r="1.0"/><circle cx="706.9" cy="274.7" r="1.5"/><circle cx="706.9" cy="304.2" r="2.0"/><circle cx="706.9" cy="333.7" r="2.5"/><circle cx="706.9" cy="363.2" r="2.8"/><circle cx="706.9" cy="392.7" r="3.0"/><circle cx="706.9" cy="422.2" r="3.2"/><circle cx="706.9" cy="451.7" r="3.2"/><circle cx="706.9" cy="481.2" r="3.0"/><circle cx="706.9" cy="510.7" r="2.8"/><circle cx="706.9" cy="540.2" r="2.5"/><circle cx="706.9" cy="569.7" r="2.0"/><circle cx="706.9" cy="599.2" r="1.5"/><circle cx="721.6" cy="289.4" r="1.2"/><circle cx="721.6" cy="318.9" r="1.7"/><circle cx="721.6" cy="348.4" r="2.1"/><circle cx="721.6" cy="377.9" r="2.4"/><circle cx="721.6" cy="407.4" r="2.5"/><circle cx="721.6" cy="436.9" r="2.6"/><circle cx="721.6" cy="466.4" r="2.5"/><circle cx="721.6" cy="495.9" r="2.4"/><circle cx="721.6" cy="525.5" r="2.1"/><circle cx="721.6" cy="555.0" r="1.7"/><circle cx="721.6" cy="584.5" r="1.3"/><circle cx="736.4" cy="333.7" r="1.3"/><circle cx="736.4" cy="363.2" r="1.6"/><circle cx="736.4" cy="392.7" r="1.9"/><circle cx="736.4" cy="422.2" r="2.0"/><circle cx="736.4" cy="451.7" r="2.0"/><circle cx="736.4" cy="481.2" r="1.9"/><circle cx="736.4" cy="510.7" r="1.7"/><circle cx="736.4" cy="540.2" r="1.4"/><circle cx="736.4" cy="569.7" r="1.0"/><circle cx="751.1" cy="377.9" r="1.2"/><circle cx="751.1" cy="407.4" r="1.4"/><circle cx="751.1" cy="436.9" r="1.4"/><circle cx="751.1" cy="466.4" r="1.4"/><circle cx="751.1" cy="495.9" r="1.2"/><circle cx="751.1" cy="525.5" r="1.0"/></g><!-- small clouds -->
<defs><path id="tc" d="M566 112 C565 128 568 142 578.700 150.700 C575 160 578 174 590 183.300 C594 192 606 199 622 192 C632 191 648 184 656.700 170 C667 170 678 156 681 144 C683.500 134 682 122 677 112z"/></defs>
<use href="#tc" transform="translate(1,.7)" fill="#000" stroke="#000" stroke-width="5.500" stroke-linejoin="round"/>
<use href="#tc" transform="translate(-1,-.7) translate(625,150) scale(.925) translate(-625,-150)" fill="#fff"/>

<g fill="#fff" stroke="#000" stroke-width="7" stroke-linejoin="miter">

<path d="M775 322 C780 312 800 308 809 321 C812 310 826 306 840 311 C852 315 858 330 853 347 C852 354 848 358 841 359 C842 368 836 374 826 377 C820 386 805 388 798 380 C794 380 790 376 786 372z"/>
<path d="M148 662 C145 640 146 620 163 608 C170 594 190 585 206 589 C218 592 225 600 227 608 C232 588 246 569 266 566.500 C278 566 288 572 290 577 C303 582 312 596 313 610 C316 625 314 640 300 652 L294 662z"/>
<path d="M722 662 C722 652 720 648 717 645 C708 638 705 622 711 608 C714 600 718 596 723 593 C732 584 750 582 762 590 C768 595 772 604 772 614 C776 602 786 595 797 595 C808 596 818 604 826 615 C833 626 835 640 829 662z"/>
</g>
<!-- big cloud -->
<defs><path id="bc" d="M306 408 C301 425 301 455 307 478 C313 505 333 545 375 563 C374 590 388 620 410 636 C425 646 440 650 446 652 L448 665 L598 665 L604 642 C630 640 662 625 674 603 C680 592 680 584 677 577 C690 575 708 566 715 552 C719 543 717 533 712 527 C730 522 750 505 756 482 C759 468 759 455 751 445 C772 436 789 410 789 380 C789 352 778 328 762 314 C758 311 754 309 750 309 C753 300 748 288 738 280 C722 266 700 262 680 262 C662 263 649 272 645 283 C635 272 612 272 598 280 C582 286 568 296 563.600 306.700 C556 290 538 273 515 267 C500 263 488 265 481 270 C470 260 452 257 438 264 C428 270 423 285 424 300 L380 360z"/></defs>
<use href="#bc" transform="translate(1,-.3)" fill="#000" stroke="#000" stroke-width="8" stroke-linejoin="miter"/>
<use href="#bc" transform="translate(-1,.3) translate(540,455) scale(.984) translate(-540,-455)" fill="#fff"/>
<g fill="#000"><path d="M573.7 167.5L549.8 286.0L547.8 299.0L543.0 328.0L550.1 299.4L553.4 286.8L578.3 168.5z"/><path d="M594.8 189.3L562.8 296.0L559.9 308.1L552.0 338.0L562.1 308.7L566.4 297.1L599.2 190.7z"/><path d="M631.9 189.1L586.3 293.0L582.2 303.9L575.0 323.0L584.3 304.8L589.7 294.5L636.1 190.9z"/><path d="M291.9 577.1L333.8 558.5L342.9 553.9L408.0 524.6L342.0 551.8L332.4 555.2L290.1 572.9z"/><path d="M309.2 602.0L366.0 567.4L375.6 560.8L432.0 525.6L374.4 558.8L364.1 564.2L306.8 598.0z"/><path d="M312.4 631.8L374.7 584.3L383.6 576.8L427.0 542.7L382.2 575.0L372.5 581.4L309.6 628.2z"/><path d="M725.1 589.0L702.2 576.4L695.2 573.1L640.0 542.7L694.0 575.1L700.4 579.6L722.9 593.0z"/><path d="M713.4 606.2L675.8 578.9L667.9 574.0L618.8 539.0L666.6 575.8L673.6 581.9L710.6 609.8z"/><path d="M711.5 632.3L661.8 588.2L654.7 582.8L627.6 560.0L653.2 584.5L659.3 591.0L708.5 635.7z"/></g>
<!-- grey star + swooshes -->
<g fill="#e6e6e6">
<path d="M487.600 333.600 Q500 365 526 388 Q548 372 560 340 Q558 380 579 402 Q600 412 638 395 Q598 440 604 473 Q615 495 645 512 Q600 506 574.700 519.600 Q568 560 572 599 Q550 550 519.700 530.300 Q490 560 463 610 Q460 560 463 521 Q430 513 392 513 Q440 480 447 455 Q442 425 421 408 Q460 410 489 414z"/>
<path d="M587 331.500 C600 326 620 322 637 327 C655 333 668 350 672 368 C673 374 673 378 672.700 382 C680 380 690 381 697 386 C706 393 711 408 708.700 422 C706 412 700 402 692 396 C684 391 676 389 668.700 390 L664.700 387.300 C664 375 658 362 650 352.700 C640 342 625 336 610 332.700 C600 331 592 331 587 331.500z"/>
<path d="M664.700 444.700 C676 452 682 464 680 475 C678 484 672 490 663.300 492.700 C670 487 674 478 674 468 C674 458 670 450 664.700 444.700z"/>
<path d="M360 428 C356 445 362 465 383 479 C374 464 371 446 372 428z"/>
</g>
<!-- black star -->
<path fill="#000" d="M524.4 389.6 Q536.1 413.5 542.0 418.4 Q547.6 416.5 561.2 399.2 Q565.4 424.0 572.4 431.2 Q577.0 433.1 598.0 428.0 Q579.8 448.0 577.2 456.8 Q579.3 466.7 596.4 487.2 Q572.8 489.2 566.0 495.2 Q559.7 502.8 554.8 530.4 Q539.1 502.8 530.8 495.2 Q521.4 502.3 498.8 528.8 Q505.5 494.8 503.6 482.4 Q495.2 478.0 466.0 475.7 Q486.7 459.1 489.0 450.0 Q491.4 440.5 481.2 416.8 Q506.5 427.7 514.8 428.0 Q520.1 419.1 524.4 389.6z"/>
<!-- hand -->
<g fill="#ffe800" stroke="#000" stroke-width="5" stroke-linejoin="round">
<path d="M20 196 L117 229 C125 212 145 200 164 200 C168 188 180 176 200 171 C212 168 218 168.500 224 170 L168 116 L264 116 L327 182 C345 198 355 207 362 207.500 C368 206 374 197 383 186 C397 170 413 155 430 146 C450 137 480 138 498 150 C512 160 518 175 516 190 C512 205 500 216 488 220 C470 228 450 238 438 250 C428 262 421 275 423 285 C425 295 434 305 441 317 C447 330 446 350 436 365 L480 395 L306 407 C280 402 255 395 235 388 C205 378 175 362 150 345 C125 330 108 310 99 289 L99 288.500 L20 258.500z"/>
</g>
<path d="M358.500 204.500 L365.500 209 L312 253.500z" fill="#000"/><path d="M98 283 L97 291 L114.500 291.700z" fill="#000"/><path d="M223 164 L218.500 169.500 L231.500 174.400z" fill="#000"/>
<!-- bolt -->
<path fill="#000" d="M300 292 L486 391.600 L422.500 408.500 L551 470 L304 409 L305 403 L358 380.500 L262 342z"/>
<path fill="#ff0099" d="M270 330 L319 311.700 L460.700 388.500 L399 405.800 L533.400 464 L316 408.200 L373 381.500z"/>
<!-- fingers -->
<g fill="#ffe800" stroke="#000" stroke-width="5" stroke-linejoin="round">
<path d="M164 200 C168 188 180 176 200 171 C208 169 214 169 218 170 C226 185 232 200 240 215 C250 235 262 250 278 260 C290 268 301 274.500 311 280.500 C321 287 323 298 316 308 C309 318 297 324 286 326 C278 327 272 326 266 323 C250 316 238 310 228 304 C212 294 200 284 190 272 C178 256 170 235 168 220z"/>
<path d="M117 229 C125 212 145 200 164 200 C166 215 170 235 178 255 C186 270 198 283 212 294 C230 306 250 316 266 323 C274 328 276 338 270 347 C264 356 254 362 241 362 C225 360 200 350 178 338 C160 328 146 318 138 307 C128 290 120 255 117 229z"/>
</g>
<g fill="#fff">
<path d="M272 310 C274 300 284 290 298 286 C308 284 315 290 315 300 C315 308 308 315 298 317 C288 319 278 318 272 310z"/>
<path d="M221 345 C224 335 234 326 248 323 C258 321 266 327 266 336 C266 344 258 350 248 352 C238 354 226 353 221 345z"/>
</g>
<!-- selection dashes & nodes -->
<g fill="none" stroke-width="1.200">
<path d="M263 275 L222 317" stroke="#2aa84a" stroke-dasharray="4 2.500"/>
<path d="M263 275 L290 288" stroke="#2aa84a" stroke-dasharray="4 2.500"/><path d="M290 288 L318 301" stroke="#2b8fd6" stroke-dasharray="4 2.500"/>
<path d="M222 317 L243 327" stroke="#2aa84a" stroke-dasharray="4 2.500"/><path d="M243 327 L270 340" stroke="#2b8fd6" stroke-dasharray="4 2.500"/>
<path d="M319 303 L472 390.800 L412 407 L549.500 469 L308 408 L367.500 382 L272 340" stroke="#7fa6d8" stroke-width=".7" stroke-dasharray="4 2.500"/>
</g>
<g fill="#fff" stroke="#333" stroke-width=".8">
<circle cx="263" cy="275" r="2.500"/><circle cx="222" cy="317" r="2.500"/>
<circle cx="472" cy="390.800" r="2" fill="none" stroke="#888"/>
</g>
<g fill="#fff"><circle cx="367.500" cy="382" r="2.600"/><circle cx="308" cy="408" r="2.600"/><circle cx="412" cy="407" r="2.600"/><circle cx="549.500" cy="469" r="2.600"/></g>
<g fill="#222"><path d="M468 378 l4 5 h-4z"/><path d="M472 398 l4 0 l-2 5z"/></g>
</svg></div><div id="bot" style="left:0;top:635px;width:879px;height:35px;background:#f5f5f5">
<div class="abs" style="left:28px;top:0;width:851px;height:12px;background:#fafafa"></div>
<div class="abs" style="left:296px;top:2px;width:302px;height:7px;border-radius:3.5px;background:#8a8a8a"></div>
<svg class="abs" style="left:866px;top:1px" width="11" height="11" viewBox="0 0 11 11" fill="none" stroke="#555" stroke-width=".9"><circle cx="4.500" cy="4.500" r="3.300"/><path d="M7 7l3 3" stroke-width="1.300"/><path d="M3 4.500h3M4.500 3v3" stroke-width=".7"/></svg>
<div class="abs" style="left:28px;top:12px;width:851px;height:23px;background:#f6f6f6;border-top:1px solid #e4e4e4"></div>
<div class="abs" style="left:0;top:0;width:28px;height:35px;background:#ececec"></div>
<div class="abs" style="left:207px;top:12px;width:124px;height:23px;background:#c6c6c6"></div>
<div class="abs" style="left:207px;top:17px;width:124px;text-align:center;font-size:10px;line-height:13px;color:#222">1: Variable Outlines</div>
<div class="abs" style="left:34px;top:14px;font-size:15px;line-height:18px;color:#555">+</div>
<div class="abs" style="left:189px;top:14px;font-size:15px;line-height:18px;color:#444">+</div>
<div class="abs" style="left:101px;top:17px;font-size:11px;line-height:13px;color:#666;word-spacing:1px">1 of 1</div>
<svg class="abs" style="left:57px;top:19px" width="10" height="9" viewBox="0 0 10 9"><path d="M2 1v7M9 1 4 4.500 9 8z" fill="#d4d4d4" stroke="#d4d4d4" stroke-width="1"/></svg>
<svg class="abs" style="left:81px;top:19px" width="8" height="9" viewBox="0 0 8 9"><path d="M6 1 2 4.500 6 8" fill="none" stroke="#d0d0d0" stroke-width="1.200"/></svg>
<svg class="abs" style="left:146px;top:19px" width="8" height="9" viewBox="0 0 8 9"><path d="M2 1l4 3.500L2 8" fill="none" stroke="#d0d0d0" stroke-width="1.200"/></svg>
<svg class="abs" style="left:167px;top:19px" width="10" height="9" viewBox="0 0 10 9"><path d="M8 1v7M1 1l5 3.500L1 8z" fill="#d4d4d4" stroke="#d4d4d4" stroke-width="1"/></svg>
</div><div id="dk" style="left:0;top:-20px;width:1200px;height:710px;pointer-events:none">
<!-- canvas v-scrollbar strip -->
<div class="abs" style="left:866px;top:121px;width:13px;height:534px;background:#fafafa;border-left:1px solid #e6e6e6"></div>
<div class="abs" style="left:869px;top:323px;width:6.500px;height:127px;border-radius:3px;background:#8b8b8b"></div>
<!-- docker bg -->
<div class="abs" style="left:879px;top:121px;width:271px;height:569px;background:#ececec;border-left:1px solid #d9d9d9"></div>
<div class="abs" style="left:880px;top:296px;width:258px;height:394px;background:#e9e9e9"></div>
<div class="abs" style="left:880px;top:121px;width:270px;height:175px;background:#f0f0f0"></div>
<!-- header -->
<svg class="abs" style="left:886px;top:128px" width="10" height="10" viewBox="0 0 10 10"><path d="M1 1l8 8M9 1 1 9" stroke="#333" stroke-width="1.100"/></svg>
<div class="abs" style="left:964px;top:126px;width:100px;text-align:center;font-size:11.5px;line-height:14px;color:#111">Properties</div>
<!-- tabs -->
<div class="seg" style="left:882px;top:148px;width:139px;height:18px"><i class="on" style="left:0;width:23px;height:16px"></i><i style="left:23px;height:16px"></i><i style="left:46px;height:16px"></i><i style="left:69px;width:23.500px;height:16px"></i><i style="left:92.500px;width:23px;height:16px"></i></div>
<svg class="abs" style="left:886px;top:150px" width="14" height="14" viewBox="0 0 14 14"><path d="M7 1C5 3 4 5 4 7.500L5.500 11h3L10 7.500C10 5 9 3 7 1z" fill="none" stroke="#444" stroke-width="1"/><path d="M7 2v6" stroke="#444"/><circle cx="7" cy="8" r="1" fill="#444"/><path d="M5 12.500h4" stroke="#444"/></svg>
<svg class="abs" style="left:909px;top:150px" width="15" height="14" viewBox="0 0 15 14"><path d="M2 7l5-5 5 5-4.500 4.500z" fill="#fff" stroke="#444"/><path d="M3.200 7.500h7.600L7.500 10.800z" fill="#e0662b"/><path d="M5 .8v5" stroke="#444"/><path d="M12.700 8.500c.8 1.200 1.200 2 1.200 2.600a1.200 1.200 0 0 1-2.400 0c0-.6.400-1.400 1.200-2.600z" fill="#e0662b"/></svg>
<svg class="abs" style="left:933px;top:151px" width="12" height="12" viewBox="0 0 12 12"><rect x=".5" y=".5" width="11" height="11" fill="#fff" stroke="#444"/><g fill="#555"><rect x="1" y="1" width="2" height="2"/><rect x="5" y="1" width="2" height="2"/><rect x="9" y="1" width="2" height="2"/><rect x="3" y="3" width="2" height="2"/><rect x="7" y="3" width="2" height="2"/><rect x="1" y="5" width="2" height="2"/><rect x="5" y="5" width="2" height="2"/><rect x="9" y="5" width="2" height="2"/><rect x="3" y="7" width="2" height="2"/><rect x="7" y="7" width="2" height="2"/><rect x="1" y="9" width="2" height="2"/><rect x="5" y="9" width="2" height="2"/><rect x="9" y="9" width="2" height="2"/></g></svg>
<div class="abs" style="left:956.500px;top:148px;width:18px;font-family:'Liberation Serif',serif;font-style:italic;font-size:13px;line-height:17px;color:#333;letter-spacing:-1px">fx</div>
<svg class="abs" style="left:978px;top:150px" width="16" height="14" viewBox="0 0 16 14"><path d="M1 9C3-3 7 1 8 7s4 8 7-1" fill="none" stroke="#333" stroke-width="1.200"/></svg>
<svg class="abs" style="left:1003px;top:150px" width="12" height="14" viewBox="0 0 12 14"><path d="M1.500 1.500h6l3 3v8h-9z" fill="#fff" stroke="#555"/><text x="6" y="10.500" font-size="7" font-family="Liberation Serif,serif" font-weight="bold" text-anchor="middle" fill="#444">i</text></svg>
<div class="abs" style="left:1093px;top:148px;width:23px;height:18px;background:#cdcdcd;border:1px solid #c2c2c2;border-radius:3px"></div>
<svg class="abs" style="left:1097px;top:151px" width="15" height="12" viewBox="0 0 15 12"><rect x=".7" y=".7" width="13.600" height="10.600" rx="1.500" fill="none" stroke="#444" stroke-width="1.200"/><path d="M1 3.200h13" stroke="#444" stroke-width="2"/></svg>
<div class="abs" style="left:1123px;top:148px;width:23px;height:18px;background:#cdcdcd;border:1px solid #c2c2c2;border-radius:3px"></div>
<svg class="abs" style="left:1127px;top:151px" width="16" height="12" viewBox="0 0 16 12"><path d="M8 1.200H2a1.300 1.300 0 0 0-1.300 1.300v7A1.300 1.300 0 0 0 2 10.800h10a1.300 1.300 0 0 0 1.300-1.300V6" fill="none" stroke="#444" stroke-width="1.200"/><ellipse cx="12" cy="3" rx="3" ry="2" fill="none" stroke="#444"/><circle cx="12" cy="3" r=".9" fill="#444"/></svg>
<!-- panel scrollbar -->
<div class="abs" style="left:1138px;top:168px;width:12px;height:522px;background:#f7f7f7"></div>
<div class="abs" style="left:1140.700px;top:171px;width:6.500px;height:430px;border-radius:3.500px;background:#808080"></div>
<!-- outline -->
<div class="abs" style="left:882px;top:174px;font-size:11.500px;font-weight:bold;line-height:14px;color:#111">Outline</div>
<i class="sq" style="top:178px"></i>
<div class="btn" style="left:884px;top:200px;width:68px;height:16px;border-radius:4px"></div>
<div class="abs" style="left:890px;top:202px;width:43px;height:11px;background:#000"></div>
<i class="blue" style="left:938px;top:201px"></i>
<i class="sq" style="top:205px"></i>
<div class="btn" style="left:884px;top:223px;width:68px;height:16px;border-radius:4px;line-height:14px;text-align:left;padding-left:15px">8.0 px</div>
<i class="blue" style="left:938px;top:224px"></i>
<div class="btn" style="left:958px;top:223px;width:83px;height:16px;border-radius:4px;line-height:14px;text-align:left;padding-left:6px">pixels</div>
<i class="chev" style="left:1030px;top:227px;width:4px;height:4px;border-width:1.200px 0 0 1.200px"></i>
<i class="chev" style="left:1030px;top:231.500px;width:4px;height:4px;border-width:0 1.200px 1.200px 0"></i>
<i class="sq" style="top:228px"></i>
<div class="btn" style="left:884px;top:247px;width:157px;height:15px;border-radius:4px"></div>
<div class="hsep" style="left:890px;top:254px;width:132px;background:#888"></div>
<i class="blue" style="left:1027px;top:248px"></i>
<div class="btn" style="left:1047px;top:246px;width:23px;height:17px;line-height:10px;font-weight:bold;font-size:11px;letter-spacing:.5px">...</div>
<i class="sq" style="top:251px"></i>
<div class="seg" style="left:884px;top:269px;width:69px"><i class="on" style="left:0;width:23px"></i><i style="left:23px"></i></div>
<svg class="abs" style="left:889px;top:271px" width="60" height="13" viewBox="0 0 60 13"><g fill="#bcbcbc"><rect x="1" y="1" width="12" height="3"/><rect x="1" y="1" width="3" height="11"/></g><g fill="#b0b0b0"><rect x="24" y="1" width="11" height="2.500"/><rect x="24" y="1" width="2.500" height="6"/><rect x="24" y="9" width="2.500" height="2.500"/><rect x="47" y="1" width="4" height="2.500"/><rect x="53" y="1" width="3" height="2.500"/><rect x="47" y="1" width="2.500" height="5"/><rect x="47" y="9" width="2.500" height="2.500"/></g></svg>
<i class="sq" style="top:274px"></i>
<!-- collapsible -->
<i class="chev" style="left:1005px;top:303px;width:5px;height:5px;border-color:#666;border-width:1.200px 0 0 1.200px"></i>
<div class="lbl r" style="left:874px;width:70px;top:317px">Miter limit:</div>
<div class="fld" style="left:948px;top:317px;width:56px;height:15px;line-height:13px;border-color:#dedede">45.0</div>
<div class="step" style="left:1006px;top:317px"></div>
<i class="sq" style="top:321px"></i>
<div class="lbl r" style="left:874px;width:70px;top:341px">Corners:</div>
<div class="seg t" style="left:948px;top:338px;width:69px"><i class="on" style="left:0"></i><i style="left:23px"></i></div>
<svg class="abs" style="left:952px;top:341px" width="62" height="13" viewBox="0 0 62 13" fill="none" stroke="#444"><path d="M2.500 12V2.500H12M5.500 12V5.500H12M8.500 12V8.500H12" stroke-width="1.300"/><path d="M25.500 12V6a3.500 3.500 0 0 1 3.500-3.500h6M28.500 12V5.500H35M31.500 12V8.500H35" stroke-width="1.100"/><path d="M48.500 12V6l3.500-3.500h6M51.500 12V5.500H58M54.500 12V8.500H58" stroke-width="1.100"/></svg>
<i class="sq" style="top:345px"></i>
<div class="lbl r" style="left:874px;width:70px;top:364px">Line caps:</div>
<div class="seg t" style="left:948px;top:361.500px;width:69px"><i class="on" style="left:0"></i><i style="left:23px"></i></div>
<svg class="abs" style="left:952px;top:364px" width="62" height="13" viewBox="0 0 62 13" fill="none" stroke="#444" stroke-width="1.100"><path d="M12 3H5v7h7M2 6.500h10M5 1.500v10"/><path d="M35 3h-4a3.500 3.500 0 0 0 0 7h4M30 6.500h5"/><circle cx="31" cy="6.500" r="1" fill="#444"/><path d="M58 3h-8v7h8M53 6.500h5"/><rect x="52.500" y="5.500" width="2" height="2" fill="#444"/></svg>
<i class="sq" style="top:368px"></i>
<div class="lbl r" style="left:874px;width:70px;top:387px">Position:</div>
<div class="seg t" style="left:948px;top:384.500px;width:69px"><i style="left:0"></i><i class="on" style="left:23px"></i></div>
<svg class="abs" style="left:952px;top:387px" width="62" height="13" viewBox="0 0 62 13" fill="none" stroke="#444" stroke-width="1.100"><path d="M2 2.500h10v10M8.500 12.500v-6H2"/><rect x="7" y="5" width="3" height="3" fill="#444"/><path d="M25 2.500h10v10M31.500 12.500v-6H25M28 4.500h5.500v8" stroke-width="1"/><path d="M48 2.500h10v10M55 12.500V5.500h-7"/><rect x="56.500" y="1" width="3" height="3" fill="#444"/></svg>
<i class="sq" style="top:391px"></i>
<div class="hsep" style="left:882px;top:410px;width:252px"></div>
<!-- arrowheads -->
<div class="lbl" style="left:882px;top:416px">Arrowheads</div>
<svg class="abs" style="left:883px;top:440px" width="11" height="10" viewBox="0 0 11 10"><path d="M10.500 5H2M5 1 .8 5 5 9" fill="none" stroke="#333" stroke-width="1.600"/></svg>
<div class="btn" style="left:897px;top:437px;width:50px;height:16px;border-radius:4px"></div>
<div class="abs" style="left:926px;top:445px;width:2px;height:1px;background:#444"></div>
<i class="blue" style="left:933px;top:438px"></i>
<div class="btn" style="left:953px;top:437px;width:30px;height:16px;line-height:9px;font-weight:bold;text-align:left;padding-left:4px;letter-spacing:.5px">...</div>
<i class="chev" style="left:973px;top:441px;width:4px;height:4px;border-color:#444;border-width:0 1.100px 1.100px 0"></i>
<i class="sq" style="top:442px"></i>
<svg class="abs" style="left:883px;top:464px" width="11" height="10" viewBox="0 0 11 10"><path d="M.5 5H9M6 1l4.200 4L6 9" fill="none" stroke="#333" stroke-width="1.600"/></svg>
<div class="btn" style="left:897px;top:461px;width:50px;height:16px;border-radius:4px"></div>
<div class="abs" style="left:904px;top:469px;width:1px;height:1px;background:#444"></div>
<i class="blue" style="left:933px;top:462px"></i>
<div class="btn" style="left:953px;top:461px;width:30px;height:16px;line-height:9px;font-weight:bold;text-align:left;padding-left:4px;letter-spacing:.5px">...</div>
<i class="chev" style="left:973px;top:465px;width:4px;height:4px;border-color:#444;border-width:0 1.100px 1.100px 0"></i>
<i class="sq" style="top:466px"></i>
<i class="cb" style="left:897px;top:484px"></i>
<div class="lbl" style="left:914px;top:483px">Share Attributes</div>
<i class="sq" style="top:487px"></i>
<div class="hsep" style="left:882px;top:504px;width:252px"></div>
<!-- variable outline -->
<div class="lbl" style="left:882px;top:514px">Variable Outline</div>
<div class="abs" style="left:1109px;top:513px;width:23px;height:18px;background:#c6c6c6;border:1px solid #bbb;border-radius:3px"></div>
<svg class="abs" style="left:1113px;top:514px" width="15" height="15" viewBox="0 0 20 20"><path d="M10 3c4 2 4 7 1 9.500 1.500-.3 2.500-1 3-2 .5 3-2 6-6 6.500-2 0-3.500-1-4.500-2.500 2 1 4 .8 5-.5 1.500-1.800 1-4-1.500-5.500 2 0 3.500.5 4 2C12 8 11.500 5 10 3z" fill="#444"/></svg>
<svg class="abs" style="left:880px;top:535px" width="245" height="24" viewBox="0 0 245 24"><path d="M7 13.500h230" stroke="#aaa" stroke-width="1.400"/><path d="M7.500 8v14M64.500 4v18M122.500 4v18M179.500 4v18M237.500 4v18" stroke="#bbb" stroke-width="1"/><g fill="#fff" stroke="#c4c4c4" stroke-width=".8"><path id="mk" d="M18 4.500h8v4l-4 3.500-4-3.500z"/><path d="M53 4.500h8v4l-4 3.500-4-3.500z"/><path d="M111 4.500h8v4l-4 3.500-4-3.500z"/><path d="M126 4.500h8v4l-4 3.500-4-3.500z"/><path d="M163 4.500h8v4l-4 3.500-4-3.500z"/><path d="M177 4.500h8v4l-4 3.500-4-3.500z"/></g><path d="M3.500 4.500h8v4l-4 3.500-4-3.500z" fill="#eaf3ff" stroke="#6aa3e8" stroke-width=".9"/></svg>
<i class="sq" style="top:548px"></i>
<div class="lbl" style="left:887px;top:573px">Position:</div>
<div class="fld" style="left:932px;top:572px;width:41px;height:15px;line-height:13px;border-color:#dedede">0.0 %</div>
<div class="lbl r" style="left:868px;width:50px;top:595px;font-size:10.500px">Side 1:</div>
<div class="lbl r" style="left:868px;width:50px;top:612px;font-size:10.500px">Side 2:</div>
<div class="fld" style="left:922px;top:596px;width:62px;height:30px;border-color:#dedede"></div>
<div class="hsep" style="left:923px;top:611px;width:60px;background:#e8e8e8"></div>
<div class="lbl" style="left:926px;top:597px">10.0</div>
<div class="lbl" style="left:926px;top:611px">8.0</div>
<div class="step" style="left:985px;top:596px"></div>
<div class="step" style="left:985px;top:612px"></div>
<div class="btn" style="left:1000px;top:602px;width:17px;height:17px"></div>
<svg class="abs" style="left:1004px;top:606px" width="9" height="10" viewBox="0 0 9 10" fill="none" stroke="#666" stroke-width="1"><path d="M7 3.200C6.500 1.200 3 1 2.500 3c-.3 1.500 4 .8 4 2.500S3 8.500 2 6.500"/><path d="M1 5h7"/></svg>
<div class="lbl" style="left:1024px;top:603px">Total:</div>
<div class="fld" style="left:1054px;top:602px;width:54px;height:16px;line-height:14px;border-color:#dedede">18.0 px</div>
<div class="step" style="left:1110px;top:602px"></div>
<i class="cb" style="left:884px;top:632px"></i>
<div class="lbl" style="left:901px;top:631px">Scale width with Stroke</div>
<div class="hsep" style="left:882px;top:652px;width:252px"></div>
<div class="lbl" style="left:882px;top:662px">Calligraphy</div>
<div class="btn" style="left:1109px;top:661px;width:23px;height:17px"></div>
<svg class="abs" style="left:1114px;top:663px" width="13" height="13" viewBox="0 0 13 13" fill="none" stroke="#444" stroke-width="1.100"><path d="M4.500 3.200A4.300 4.300 0 1 1 3 9.500" /><path d="M6.500.8 4 3.200l2.500 2.300"/><path d="M2.200 5.500l.1.100M1.800 7.500l.1.100" stroke-linecap="round"/></svg>
<div class="btn" style="left:1014px;top:687px;width:39px;height:10px"></div>
<div class="abs" style="left:986px;top:687px;width:12px;height:12px;border-radius:50%;background:#fff;border:1px solid #d4d4d4"></div>
<!-- right icon column -->
<div class="abs" style="left:1150px;top:121px;width:26px;height:569px;background:#ececec;border-left:1px solid #dcdcdc;border-right:1px solid #dcdcdc"></div>
<svg class="abs" style="left:1155px;top:126px" width="14" height="14" viewBox="0 0 14 14"><path d="M7 1.500 13 4 7 6.500 1 4z" fill="#444"/><path d="M3 5.500V10c1 1.800 7 1.800 8 0V5.500L7 7.200z" fill="#444"/><path d="M12.300 4.500v4" stroke="#444"/><ellipse cx="7" cy="9.500" rx="2.800" ry="1.200" fill="#ececec"/></svg>
<div class="abs" style="left:1151px;top:145px;width:24px;height:24px;background:#c9c9c9"></div>
<svg class="abs" style="left:1154px;top:149px" width="17" height="16" viewBox="0 0 17 16" fill="none" stroke="#444" stroke-width="1.100"><path d="M3.500 2.500v11M3.500 2.500h10"/><rect x="2" y="1" width="3" height="3" fill="#444"/><rect x="2" y="12" width="3" height="3" fill="#444"/><rect x="12" y="1" width="3" height="3" fill="#444"/><path d="M8 7.500h2M11.500 7.500h4M8 10.500h2M11.500 10.500h4M8 13.500h2M11.500 13.500h4" stroke-width="1.300"/></svg>
<svg class="abs" style="left:1155px;top:174px" width="14" height="15" viewBox="0 0 14 15"><path d="M7 1.500 13 5 7 8.500 1 5z" fill="none" stroke="#333" stroke-width="1.200"/><path d="M1.200 8.800 7 12.300l5.800-3.500L7 14.300z" fill="#333" stroke="#333" stroke-width=".8" stroke-linejoin="round"/></svg>
<div class="abs" style="left:1155px;top:672px;font-size:13px;font-weight:bold;color:#444;line-height:10px;letter-spacing:.5px">...</div>
</div>
<div id="pal" style="left:1176px;top:101px;width:24px;height:569px;background:#ececec"><svg class="abs" style="left:4px;top:4px" width="15" height="15" viewBox="0 0 15 15"><rect x=".5" y=".5" width="14" height="14" rx="2" fill="#fff" stroke="#d8d8d8"/><path d="M2 13 13 2" stroke="#e2574c" stroke-width=".9"/></svg><div class="abs" style="left:4px;top:21px;width:14px;height:530.0px;border-radius:3px;overflow:hidden"><div class="abs" style="left:0;top:0.00px;width:14px;height:13.55px;background:#000000"></div><div class="abs" style="left:0;top:13.25px;width:14px;height:13.55px;background:#1a1a1a"></div><div class="abs" style="left:0;top:26.50px;width:14px;height:13.55px;background:#333333"></div><div class="abs" style="left:0;top:39.75px;width:14px;height:13.55px;background:#4d4d4d"></div><div class="abs" style="left:0;top:53.00px;width:14px;height:13.55px;background:#666666"></div><div class="abs" style="left:0;top:66.25px;width:14px;height:13.55px;background:#808080"></div><div class="abs" style="left:0;top:79.50px;width:14px;height:13.55px;background:#999999"></div><div class="abs" style="left:0;top:92.75px;width:14px;height:13.55px;background:#b3b3b3"></div><div class="abs" style="left:0;top:106.00px;width:14px;height:13.55px;background:#cccccc"></div><div class="abs" style="left:0;top:119.25px;width:14px;height:13.55px;background:#e6e6e6"></div><div class="abs" style="left:0;top:132.50px;width:14px;height:13.55px;background:#ffffff"></div><div class="abs" style="left:0;top:145.75px;width:14px;height:13.55px;background:#0000ff"></div><div class="abs" style="left:0;top:159.00px;width:14px;height:13.55px;background:#00ffff"></div><div class="abs" style="left:0;top:172.25px;width:14px;height:13.55px;background:#00ff00"></div><div class="abs" style="left:0;top:185.50px;width:14px;height:13.55px;background:#ffff00"></div><div class="abs" style="left:0;top:198.75px;width:14px;height:13.55px;background:#ff0000"></div><div class="abs" style="left:0;top:212.00px;width:14px;height:13.55px;background:#ff00ff"></div><div class="abs" style="left:0;top:225.25px;width:14px;height:13.55px;background:#9900cc"></div><div class="abs" style="left:0;top:238.50px;width:14px;height:13.55px;background:#ff6600"></div><div class="abs" style="left:0;top:251.75px;width:14px;height:13.55px;background:#ff99cc"></div><div class="abs" style="left:0;top:265.00px;width:14px;height:13.55px;background:#6b2d2d"></div><div class="abs" style="left:0;top:278.25px;width:14px;height:13.55px;background:#ccccff"></div><div class="abs" style="left:0;top:291.50px;width:14px;height:13.55px;background:#9999ff"></div><div class="abs" style="left:0;top:304.75px;width:14px;height:13.55px;background:#6699ff"></div><div class="abs" style="left:0;top:318.00px;width:14px;height:13.55px;background:#6666ff"></div><div class="abs" style="left:0;top:331.25px;width:14px;height:13.55px;background:#6666cc"></div><div class="abs" style="left:0;top:344.50px;width:14px;height:13.55px;background:#003399"></div><div class="abs" style="left:0;top:357.75px;width:14px;height:13.55px;background:#000080"></div><div class="abs" style="left:0;top:371.00px;width:14px;height:13.55px;background:#336699"></div><div class="abs" style="left:0;top:384.25px;width:14px;height:13.55px;background:#00ccff"></div><div class="abs" style="left:0;top:397.50px;width:14px;height:13.55px;background:#99ffff"></div><div class="abs" style="left:0;top:410.75px;width:14px;height:13.55px;background:#99cccc"></div><div class="abs" style="left:0;top:424.00px;width:14px;height:13.55px;background:#669999"></div><div class="abs" style="left:0;top:437.25px;width:14px;height:13.55px;background:#336666"></div><div class="abs" style="left:0;top:450.50px;width:14px;height:13.55px;background:#003333"></div><div class="abs" style="left:0;top:463.75px;width:14px;height:13.55px;background:#006633"></div><div class="abs" style="left:0;top:477.00px;width:14px;height:13.55px;background:#009933"></div><div class="abs" style="left:0;top:490.25px;width:14px;height:13.55px;background:#339966"></div><div class="abs" style="left:0;top:503.50px;width:14px;height:13.55px;background:#33cc66"></div><div class="abs" style="left:0;top:516.75px;width:14px;height:13.55px;background:#33cc33"></div></div><div class="abs" style="left:7px;top:554px;width:9px;height:9px;border-radius:50%;background:#b4b4b4"></div><i class="chev" style="left:9.5px;top:556px;width:3.5px;height:3.5px;border-color:#fff;border-width:0 1px 1px 0"></i></div></div><div id="dock" class="abs" style="left:408px;top:691px;width:384px;height:55px;background:#5e6c72;border-radius:11px;box-shadow:0 0 0 .5px rgba(255,255,255,.12)">
<!-- coords relative: abs-(408,691) -->
<svg class="abs" style="left:7.500px;top:8.500px" width="34" height="35" viewBox="0 0 34 35"><defs><linearGradient id="fg1" x1="0" y1="0" x2="0" y2="1"><stop offset="0" stop-color="#3ab0f5"/><stop offset="1" stop-color="#1c7fe0"/></linearGradient><clipPath id="fc"><rect width="34" height="35" rx="7.500"/></clipPath></defs><g clip-path="url(#fc)"><rect width="34" height="35" fill="url(#fg1)"/><path d="M19 0h15v35H17c-1-4-1.500-8-1.500-12h5C20 15 20 7 19 0z" fill="#e9eef3"/><path d="M9.500 9.500v4M24.500 9.500v4" stroke="#1b2a3a" stroke-width="1.700" stroke-linecap="round"/><path d="M6 22c6 6 16 6 22 0" fill="none" stroke="#1b2a3a" stroke-width="1.500" stroke-linecap="round"/></g></svg>
<svg class="abs" style="left:52.500px;top:8.500px" width="34" height="35" viewBox="0 0 34 35"><rect width="34" height="35" rx="7.500" fill="#eceef0"/><circle cx="17" cy="17.500" r="13.500" fill="#2a8df0"/><circle cx="17" cy="17.500" r="13.500" fill="none" stroke="#d8dde2" stroke-width="1"/><path d="M25.500 9 19 19.500 15 15.500z" fill="#f5453a"/><path d="M8.500 26 15 15.500l4 4z" fill="#fff"/></svg>
<svg class="abs" style="left:97.500px;top:8.500px" width="34" height="35" viewBox="0 0 34 35"><defs><linearGradient id="cg" x1="0" y1="0" x2="1" y2="1"><stop offset="0" stop-color="#3fd35a"/><stop offset=".55" stop-color="#14952f"/><stop offset="1" stop-color="#06601a"/></linearGradient></defs><path d="M7 0h20l7 7v21a7 7 0 0 1-7 7H7a7 7 0 0 1-7-7V7a7 7 0 0 1 7-7z" fill="url(#cg)"/><path d="M0 14 21 35H7a7 7 0 0 1-7-7z" fill="#07501a" opacity=".55"/><rect x="7" y="14.500" width="20" height="6.500" rx="3.200" transform="rotate(40 17 17.500)" fill="#f4f6f4"/><path d="M24 22.500l3.500 4.500-5-2.500z" fill="#e8ece8"/></svg>
<svg class="abs" style="left:142.500px;top:8.500px" width="34" height="35" viewBox="0 0 34 35"><defs><linearGradient id="rg" x1="0" y1="0" x2="1" y2="1"><stop offset="0" stop-color="#e0233c"/><stop offset="1" stop-color="#a80f26"/></linearGradient></defs><rect width="34" height="35" rx="8" fill="url(#rg)"/><circle cx="16" cy="19" r="8.500" fill="#f1dfe1"/><circle cx="16" cy="19" r="6.300" fill="#4a4a50"/><circle cx="16" cy="19" r="3.500" fill="#8d8d95"/><circle cx="27" cy="7.500" r="2.300" fill="#fff"/></svg>
<svg class="abs" style="left:187.500px;top:8.500px" width="34" height="35" viewBox="0 0 34 35"><defs><linearGradient id="bg2" x1="0" y1="0" x2="1" y2="1"><stop offset="0" stop-color="#3aa7dc"/><stop offset=".6" stop-color="#1a6f9c"/><stop offset="1" stop-color="#0c4a6c"/></linearGradient></defs><path d="M7 0h27v28a7 7 0 0 1-7 7H0V7a7 7 0 0 1 7-7z" fill="url(#bg2)"/><text x="17.500" y="27" font-family="Liberation Serif,serif" font-weight="bold" font-size="27" fill="#fff" text-anchor="middle">f</text></svg>
<svg class="abs" style="left:232.500px;top:8.500px" width="34" height="35" viewBox="0 0 34 35"><rect width="34" height="35" rx="7.500" fill="#c9cbcd"/><g><rect x="5.500" y="6" width="6.500" height="6.500" rx="1.500" fill="#3ec458"/><rect x="13.750" y="6" width="6.500" height="6.500" rx="1.500" fill="#f7b42c"/><rect x="22" y="6" width="6.500" height="6.500" rx="1.500" fill="#f4733b"/><rect x="5.500" y="14.250" width="6.500" height="6.500" rx="1.500" fill="#ef4339"/><rect x="13.750" y="14.250" width="6.500" height="6.500" rx="1.500" fill="#9a9da1"/><rect x="22" y="14.250" width="6.500" height="6.500" rx="1.500" fill="#f0564b"/><rect x="5.500" y="22.500" width="6.500" height="6.500" rx="1.500" fill="#a550d8"/><rect x="13.750" y="22.500" width="6.500" height="6.500" rx="1.500" fill="#3d8cf0"/><rect x="22" y="22.500" width="6.500" height="6.500" rx="1.500" fill="#34b6e8"/></g></svg>
<svg class="abs" style="left:277.500px;top:8.500px" width="34" height="35" viewBox="0 0 34 35"><defs><linearGradient id="ag" x1="0" y1="0" x2="0" y2="1"><stop offset="0" stop-color="#2fa4f7"/><stop offset="1" stop-color="#1566e0"/></linearGradient></defs><rect width="34" height="35" rx="7.500" fill="url(#ag)"/><g fill="none" stroke="#fff" stroke-width="2.400" stroke-linecap="round"><path d="M17 8.500 9 24.500M15.500 8.500l9.500 16M7 20.500h20"/></g></svg>
<div class="abs" style="left:327px;top:9px;width:1px;height:36px;background:#3e4a4f"></div>
<svg class="abs" style="left:343px;top:8px" width="31" height="36" viewBox="0 0 31 36"><defs><linearGradient id="tg" x1="0" y1="0" x2="1" y2="0"><stop offset="0" stop-color="#d9dcde"/><stop offset=".5" stop-color="#f3f4f5"/><stop offset="1" stop-color="#cfd3d5"/></linearGradient></defs><path d="M1 4h29l-3.500 29.500c-.2 1.500-1.500 2.500-3 2.500h-16c-1.500 0-2.800-1-3-2.500z" fill="url(#tg)"/><ellipse cx="15.500" cy="4" rx="14.500" ry="3.200" fill="#e9ebec" stroke="#c4c8ca" stroke-width=".8"/></svg>
<div class="abs" style="left:22.500px;top:49px;width:3.500px;height:3.500px;border-radius:50%;background:#111"></div>
<div class="abs" style="left:112.500px;top:49px;width:3.500px;height:3.500px;border-radius:50%;background:#111"></div>
</div>
</body></html>
